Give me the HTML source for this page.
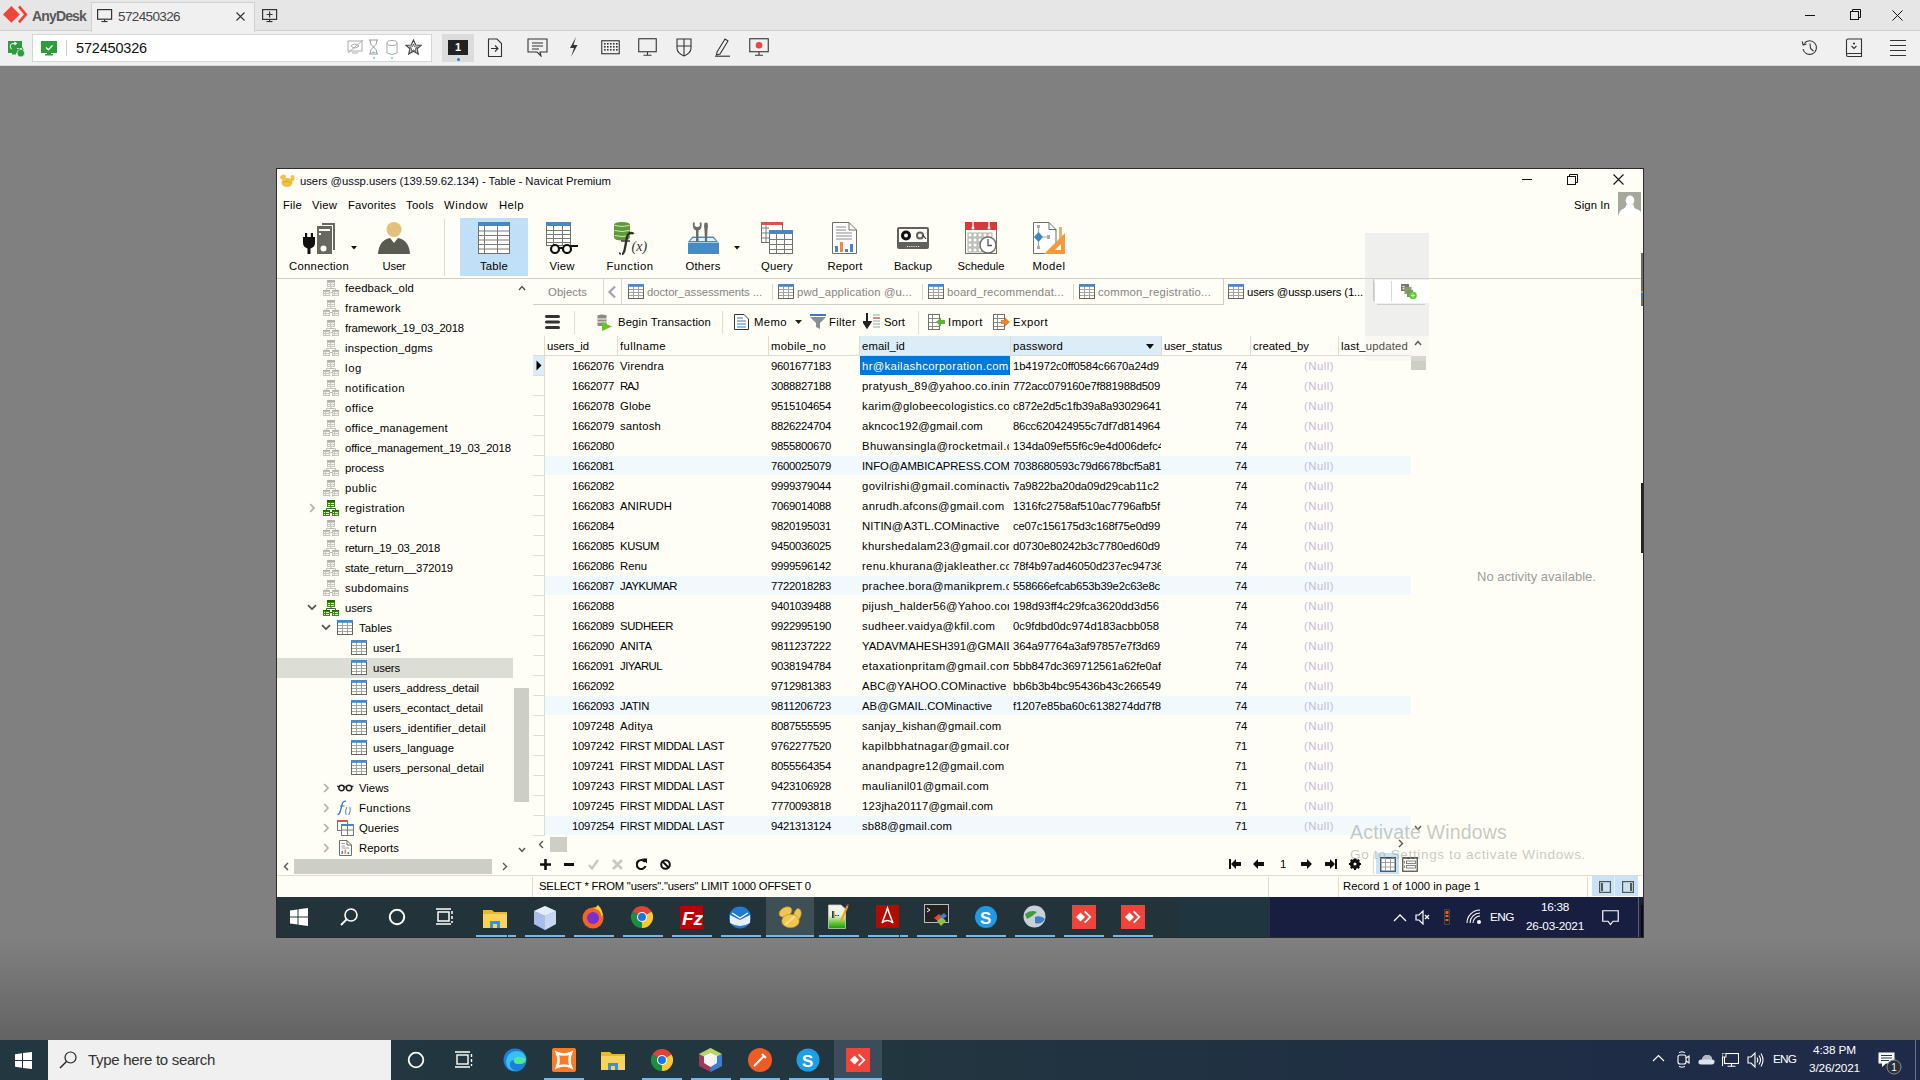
<!DOCTYPE html><html><head><meta charset="utf-8"><style>
html,body{margin:0;padding:0;width:1920px;height:1080px;overflow:hidden;background:#808080;}
body{position:relative;font-family:"Liberation Sans",sans-serif;}
.r{position:absolute;}
.t{position:absolute;white-space:pre;font-family:"Liberation Sans",sans-serif;}
</style></head><body>

<div class="r" style="left:0px;top:0px;width:1920px;height:31px;background:#e6e6e6;"></div>
<div class="r" style="left:0px;top:30px;width:1920px;height:1px;background:#cfcfcf;"></div>
<div class="r" style="left:0px;top:31px;width:1920px;height:35px;background:#f0f0f0;"></div>
<div class="r" style="left:0px;top:65px;width:1920px;height:1px;background:#d9d9d9;"></div>
<div class="r" style="left:0px;top:66px;width:1920px;height:974px;background:linear-gradient(to bottom,#808080 0px,#808080 872px,#636363 974px);"></div>
<svg class="r" style="left:2px;top:5px;" width="27" height="20" viewBox="0 0 27 20"><path d="M1 9.4 L9.4 1 L17.8 9.4 L9.4 17.8 Z" fill="#f0443a"/><path d="M16 2.6 L18 0.6 L25.6 9.4 L18 18.2 L16 16.2 L22 9.4 Z" fill="#f0443a"/></svg>
<div class="t " style="left:32px;top:5px;height:22px;line-height:22px;font-size:14px;color:#595959;letter-spacing:-0.845px;font-weight:bold;">AnyDesk</div>
<div class="r" style="left:91px;top:2px;width:164px;height:29px;background:#f0f0f0;border:1px solid #d0d0d0;border-bottom:none;box-sizing:border-box;height:30px;"></div>
<svg class="r" style="left:97px;top:9px;" width="16" height="14" viewBox="0 0 16 14"><rect x="0.6" y="0.6" width="14" height="9.6" fill="none" stroke="#333" stroke-width="1.2"/><rect x="7" y="10.5" width="1.2" height="2" fill="#333"/><rect x="4.5" y="12" width="6" height="1.1" fill="#333"/></svg>
<div class="t " style="left:118px;top:6px;height:22px;line-height:22px;font-size:13.5px;color:#444;letter-spacing:-0.618px;">572450326</div>
<svg class="r" style="left:235px;top:11px;" width="11" height="11" viewBox="0 0 11 11"><path d="M1.5 1.5 L9.5 9.5 M9.5 1.5 L1.5 9.5" stroke="#333" stroke-width="1.1"/></svg>
<svg class="r" style="left:262px;top:9px;" width="16" height="14" viewBox="0 0 16 14"><rect x="0.6" y="0.6" width="14" height="9.8" fill="none" stroke="#333" stroke-width="1.2"/><path d="M7.6 2.5 V8.5 M4.6 5.5 H10.6" stroke="#333" stroke-width="1.2"/><rect x="7" y="10.5" width="1.2" height="2" fill="#333"/><rect x="4.5" y="12" width="6" height="1.1" fill="#333"/></svg>
<div class="r" style="left:1805px;top:15px;width:10px;height:1px;background:#111;"></div>
<svg class="r" style="left:1850px;top:9px;" width="12" height="12" viewBox="0 0 12 12"><rect x="0.5" y="2.5" width="8" height="8" fill="none" stroke="#111"/><path d="M2.5 2.5 V0.5 H10.5 V8.5 H8.5" fill="none" stroke="#111"/></svg>
<svg class="r" style="left:1892px;top:10px;" width="11" height="11" viewBox="0 0 11 11"><path d="M0.5 0.5 L10.5 10.5 M10.5 0.5 L0.5 10.5" stroke="#111" stroke-width="1"/></svg>
<div class="r" style="left:32px;top:34px;width:400px;height:28px;background:#fff;border:1px solid #d5d5d5;box-sizing:border-box;"></div>
<svg class="r" style="left:7px;top:40px;" width="18" height="17" viewBox="0 0 18 17"><rect x="1" y="1" width="14" height="12" fill="#2e9b3c"/><rect x="5" y="13" width="4" height="1.5" fill="#2e9b3c"/><path d="M4.5 9 Q2.5 7 3.5 5 Q5 3 9 3.5 M7.5 2 L9.5 3.5 L7.5 5" stroke="#e8f5ea" stroke-width="1.1" fill="none"/><rect x="10" y="8" width="8" height="1" fill="#f0f0f0"/><circle cx="13.8" cy="13.2" r="3.8" fill="#2e9b3c" stroke="#f0f0f0" stroke-width="0.8"/><path d="M11.8 10.5 V9.3 Q11.8 7.5 13.8 7.5 Q15.8 7.5 15.8 9.3 V10.5" fill="none" stroke="#2e9b3c" stroke-width="1.1"/></svg>
<svg class="r" style="left:41px;top:41px;" width="17" height="15" viewBox="0 0 17 15"><rect x="0" y="0" width="16" height="12" fill="#2e9b3c"/><rect x="6" y="12" width="4" height="1.5" fill="#2e9b3c"/><rect x="4" y="13" width="8" height="1.5" fill="#2e9b3c"/><path d="M5 6.5 L7.3 8.8 L11.5 4.5" stroke="#fff" stroke-width="1.3" fill="none"/></svg>
<div class="r" style="left:66px;top:40px;width:1px;height:16px;background:#cfcfcf;"></div>
<div class="t " style="left:76px;top:37px;height:22px;line-height:22px;font-size:14.5px;color:#111;letter-spacing:-0.174px;">572450326</div>
<svg class="r" style="left:347px;top:40px;" width="17" height="15" viewBox="0 0 17 15"><rect x="1" y="1" width="14" height="10" fill="none" stroke="#aaa" stroke-width="1"/><path d="M1 13 L16 0" stroke="#aaa"/><path d="M4 6 Q8 2 12 6 Q8 10 4 6" fill="none" stroke="#aaa"/><rect x="5" y="12.5" width="6" height="1" fill="#aaa"/></svg>
<svg class="r" style="left:368px;top:39px;" width="11" height="17" viewBox="0 0 11 17"><path d="M1 1 H10 M1 15 H10 M2 1 Q2 6 5.5 8 Q9 6 9 1 M2 15 Q2 10 5.5 8 Q9 10 9 15" fill="none" stroke="#999" stroke-width="1"/><path d="M3 14 Q5.5 11 8 14 Z" fill="#aaa"/></svg>
<div class="r" style="left:373px;top:57px;width:2px;height:2px;background:#9ecdf2;"></div>
<svg class="r" style="left:386px;top:40px;" width="12" height="16" viewBox="0 0 12 16"><ellipse cx="6" cy="3" rx="5" ry="2.5" fill="none" stroke="#aaa"/><path d="M1 3 V13 Q6 16 11 13 V3" fill="none" stroke="#aaa"/></svg>
<div class="r" style="left:391px;top:57px;width:2px;height:2px;background:#9ecdf2;"></div>
<svg class="r" style="left:405px;top:39px;" width="17" height="16" viewBox="0 0 17 16"><path d="M8.5 1 L10.7 6 L16 6.3 L12 9.8 L13.3 15 L8.5 12.2 L3.7 15 L5 9.8 L1 6.3 L6.3 6 Z" fill="none" stroke="#444" stroke-width="1.2"/><path d="M8.5 5 L9.6 7.8 L12.5 8 L10.3 9.8 L11 12.5 L8.5 11 L6 12.5 L6.7 9.8 L4.5 8 L7.4 7.8 Z" fill="none" stroke="#444" stroke-width="0.8"/></svg>
<div class="r" style="left:442px;top:34px;width:32px;height:28px;background:#dcdcdc;"></div>
<div class="r" style="left:448px;top:40px;width:20px;height:15px;background:#222;"></div>
<div class="t " style="left:448px;top:40px;height:15px;line-height:15px;font-size:11px;color:#fff;width:20px;text-align:center;font-weight:bold;">1</div>
<div class="r" style="left:457px;top:58px;width:3px;height:3px;background:#1b7fd6;border-radius:50%;"></div>
<svg class="r" style="left:487px;top:38px;" width="16" height="20" viewBox="0 0 16 20"><path d="M1.5 1 H10 L14.5 5.5 V18.5 H1.5 Z" fill="none" stroke="#333" stroke-width="1.1"/><path d="M4 10.5 H11 M8 7.5 L11 10.5 L8 13.5" fill="none" stroke="#333" stroke-width="1.1"/></svg>
<svg class="r" style="left:527px;top:38px;" width="21" height="19" viewBox="0 0 21 19"><path d="M1 1 H20 V14 H13 L14 18 L10 14 H1 Z" fill="none" stroke="#333" stroke-width="1.1"/><path d="M5 5 H16 M5 8 H16 M5 11 H12" stroke="#333" stroke-width="1"/></svg>
<svg class="r" style="left:568px;top:37px;" width="11" height="21" viewBox="0 0 11 21"><path d="M8 0 L2 11 L6 11 L3 20 L9.5 8 L5.5 8 Z" fill="#333"/></svg>
<svg class="r" style="left:601px;top:40px;" width="19" height="15" viewBox="0 0 19 15"><rect x="0.75" y="0.75" width="17.5" height="13" fill="none" stroke="#333" stroke-width="1.1"/><rect x="3" y="3" width="1.6" height="1.6" fill="#333"/><rect x="6" y="3" width="1.6" height="1.6" fill="#333"/><rect x="9" y="3" width="1.6" height="1.6" fill="#333"/><rect x="12" y="3" width="1.6" height="1.6" fill="#333"/><rect x="15" y="3" width="1.6" height="1.6" fill="#333"/><rect x="3" y="6" width="1.6" height="1.6" fill="#333"/><rect x="6" y="6" width="1.6" height="1.6" fill="#333"/><rect x="9" y="6" width="1.6" height="1.6" fill="#333"/><rect x="12" y="6" width="1.6" height="1.6" fill="#333"/><rect x="15" y="6" width="1.6" height="1.6" fill="#333"/><rect x="3" y="9" width="1.6" height="1.6" fill="#333"/><rect x="6" y="9" width="1.6" height="1.6" fill="#333"/><rect x="9" y="9" width="1.6" height="1.6" fill="#333"/><rect x="12" y="9" width="1.6" height="1.6" fill="#333"/><rect x="15" y="9" width="1.6" height="1.6" fill="#333"/></svg>
<svg class="r" style="left:638px;top:38px;" width="19" height="18" viewBox="0 0 19 18"><rect x="0.75" y="0.75" width="17.5" height="13" fill="none" stroke="#333" stroke-width="1.1"/><path d="M9.5 14 V17 M5.5 17.3 H13.5" stroke="#333" stroke-width="1.1"/></svg>
<svg class="r" style="left:676px;top:38px;" width="16" height="19" viewBox="0 0 16 19"><path d="M1 1 H15 V10 Q15 15 8 18 Q1 15 1 10 Z" fill="none" stroke="#333" stroke-width="1.1"/><path d="M8 1 V18 M1 8 H15" stroke="#333" stroke-width="1.1"/></svg>
<svg class="r" style="left:713px;top:37px;" width="18" height="20" viewBox="0 0 18 20"><path d="M4 15 L12 2 L15 4 L7 17 L3.5 18 Z" fill="none" stroke="#333" stroke-width="1.1"/><path d="M2 19.2 H17" stroke="#333" stroke-width="1.1"/></svg>
<svg class="r" style="left:749px;top:38px;" width="20" height="18" viewBox="0 0 20 18"><rect x="0.75" y="0.75" width="18.5" height="13" fill="none" stroke="#333" stroke-width="1.1"/><circle cx="10" cy="7.2" r="3.3" fill="#e8463f"/><path d="M10 14 V17 M6 17.3 H14" stroke="#333" stroke-width="1.1"/></svg>
<svg class="r" style="left:1801px;top:39px;" width="18" height="17" viewBox="0 0 18 17"><path d="M3.2 4.5 A6.8 6.8 0 1 1 2 10" fill="none" stroke="#333" stroke-width="1.1"/><path d="M1.2 2.5 L2.2 6 L5.5 5" fill="none" stroke="#333" stroke-width="1.1"/><path d="M9 4.5 L9.5 9.5 L12.5 12" fill="none" stroke="#333" stroke-width="1.1"/></svg>
<svg class="r" style="left:1845px;top:38px;" width="18" height="20" viewBox="0 0 18 20"><path d="M1.5 16 V2.5 Q1.5 1 3 1 H16.5 V18.5 H3 Q1.5 18.5 1.5 17 Q1.5 15.5 3 15.5 H16.5" fill="none" stroke="#333" stroke-width="1.1"/><circle cx="9" cy="5.5" r="1.1" fill="#333"/><path d="M6.5 8 L9 10.5 L11.5 8" fill="none" stroke="#333" stroke-width="1.1"/></svg>
<div class="r" style="left:1890px;top:40px;width:16px;height:1px;background:#333;"></div>
<div class="r" style="left:1890px;top:45px;width:16px;height:1px;background:#333;"></div>
<div class="r" style="left:1890px;top:50px;width:16px;height:1px;background:#333;"></div>
<div class="r" style="left:1890px;top:55px;width:16px;height:1px;background:#333;"></div>
<div class="r" style="left:276px;top:168px;width:1368px;height:770px;background:#fffef6;border:1px solid #2b2b2b;box-sizing:border-box;"></div>
<svg class="r" style="left:279px;top:172px;" width="17" height="16" viewBox="0 0 17 16"><ellipse cx="8" cy="10.5" rx="5.5" ry="4.5" fill="#f0c040"/><ellipse cx="4" cy="5" rx="3" ry="2.2" fill="#f0c040" transform="rotate(-30 4 5)"/><ellipse cx="13.5" cy="6" rx="2" ry="3" fill="#f0c040"/><path d="M4 10 Q8 8 12 11" stroke="#e0a820" fill="none"/></svg>
<div class="t " style="left:300px;top:171px;height:20px;line-height:20px;font-size:11.3px;color:#0a0a1a;letter-spacing:-0.029px;">users @ussp.users (139.59.62.134) - Table - Navicat Premium</div>
<div class="r" style="left:1522px;top:179px;width:10px;height:1px;background:#111;"></div>
<svg class="r" style="left:1567px;top:174px;" width="11" height="11" viewBox="0 0 11 11"><rect x="0.5" y="2.5" width="8" height="8" fill="none" stroke="#111"/><path d="M2.5 2.5 V0.5 H10.5 V8.5 H8.5" fill="none" stroke="#111"/></svg>
<svg class="r" style="left:1613px;top:174px;" width="11" height="11" viewBox="0 0 11 11"><path d="M0.5 0.5 L10.5 10.5 M10.5 0.5 L0.5 10.5" stroke="#111" stroke-width="1.1"/></svg>
<div class="t " style="left:283px;top:195px;height:20px;line-height:20px;font-size:11.3px;color:#000;letter-spacing:0.198px;">File</div>
<div class="t " style="left:312px;top:195px;height:20px;line-height:20px;font-size:11.3px;color:#000;letter-spacing:0.178px;">View</div>
<div class="t " style="left:348px;top:195px;height:20px;line-height:20px;font-size:11.3px;color:#000;letter-spacing:0.170px;">Favorites</div>
<div class="t " style="left:406px;top:195px;height:20px;line-height:20px;font-size:11.3px;color:#000;letter-spacing:0.324px;">Tools</div>
<div class="t " style="left:444px;top:195px;height:20px;line-height:20px;font-size:11.3px;color:#000;letter-spacing:0.635px;">Window</div>
<div class="t " style="left:499px;top:195px;height:20px;line-height:20px;font-size:11.3px;color:#000;letter-spacing:0.440px;">Help</div>
<div class="t " style="left:1574px;top:195px;height:20px;line-height:20px;font-size:11.3px;color:#000;letter-spacing:0.117px;">Sign In</div>
<svg class="r" style="left:1618px;top:192px;" width="23" height="25" viewBox="0 0 23 25"><rect width="23" height="25" fill="#a6a89e"/><ellipse cx="12" cy="8.5" rx="4.3" ry="5" fill="#fff"/><path d="M8.5 12.5 Q8 15 6 16.5 Q1 18 0 25 H23 V20 Q21 17 17 16.5 Q15.5 15 15.5 12.5 Z" fill="#fff"/></svg>
<div class="r" style="left:460px;top:218px;width:68px;height:58px;background:#bfe0f6;"></div>
<div class="r" style="left:444px;top:219px;width:1px;height:57px;background:#dcdcd4;"></div>
<div class="r" style="left:277px;top:278px;width:1365px;height:1px;background:#cfcfc6;"></div>
<svg class="r" style="left:302px;top:222px;" width="34" height="32" viewBox="0 0 34 32"><path d="M1 15 H13 V21 Q13 25 8.5 26.5 V32 H5.5 V26.5 Q1 25 1 21 Z" fill="#111"/><rect x="3" y="11" width="2.2" height="5" fill="#111"/><rect x="8.8" y="11" width="2.2" height="5" fill="#111"/><path d="M20 1 H33 V28 H31 V3 H20 Z" fill="#666a5e"/><rect x="15" y="4" width="15" height="28" fill="#666a5e"/><rect x="17" y="7" width="11" height="2" fill="#fff"/><rect x="17" y="11" width="2" height="2" fill="#fff"/><circle cx="21.5" cy="26.5" r="3" fill="#fff"/></svg>
<svg class="r" style="left:351px;top:246px;" width="6" height="4" viewBox="0 0 6 4"><path d="M0 0 H6 L3 3.5 Z" fill="#111"/></svg>
<div class="t " style="left:289.0px;top:256px;height:20px;line-height:20px;font-size:11.3px;color:#000;letter-spacing:0.284px;">Connection</div>
<svg class="r" style="left:378px;top:222px;" width="32" height="32" viewBox="0 0 32 32"><circle cx="16" cy="7.5" r="7.5" fill="#e3c17a"/><path d="M0 32 Q1 18 12 16 L16 21 L20 16 Q31 18 32 32 Z" fill="#595b50"/></svg>
<div class="t " style="left:382.5px;top:256px;height:20px;line-height:20px;font-size:11.3px;color:#000;letter-spacing:-0.214px;">User</div>
<svg class="r" style="left:478px;top:222px;" width="32" height="32" viewBox="0 0 32 32"><rect x="0.5" y="0.5" width="31" height="31" fill="#fff" stroke="#6f7068"/><rect x="0" y="0" width="32" height="4" fill="#4a86c0"/><rect x="1" y="8.5" width="30" height="1" fill="#7a7b72"/><rect x="1" y="13.0" width="30" height="1" fill="#7a7b72"/><rect x="1" y="17.5" width="30" height="1" fill="#7a7b72"/><rect x="1" y="22.0" width="30" height="1" fill="#7a7b72"/><rect x="1" y="26.5" width="30" height="1" fill="#7a7b72"/><rect x="6" y="4" width="1" height="27" fill="#7a7b72"/><rect x="19" y="4" width="1" height="27" fill="#7a7b72"/></svg>
<div class="t " style="left:480.0px;top:256px;height:20px;line-height:20px;font-size:11.3px;color:#000;letter-spacing:0.198px;">Table</div>
<svg class="r" style="left:546px;top:222px;" width="33" height="32" viewBox="0 0 33 32"><rect x="0.5" y="0.5" width="24" height="23" fill="#fff" stroke="#6f7068"/><rect x="0" y="0" width="25" height="4" fill="#4a86c0"/><rect x="1" y="8.0" width="23" height="1" fill="#7a7b72"/><rect x="1" y="12.0" width="23" height="1" fill="#7a7b72"/><rect x="1" y="16.0" width="23" height="1" fill="#7a7b72"/><rect x="1" y="20.0" width="23" height="1" fill="#7a7b72"/><rect x="7" y="4" width="1" height="19" fill="#7a7b72"/><rect x="16" y="4" width="1" height="19" fill="#7a7b72"/><circle cx="9" cy="27" r="4" fill="#fffef6" stroke="#111" stroke-width="2.2"/><circle cx="21" cy="27" r="4" fill="#fffef6" stroke="#111" stroke-width="2.2"/><path d="M13 26 H17 M25 24 L32 24" stroke="#111" stroke-width="2"/></svg>
<div class="t " style="left:549.5px;top:256px;height:20px;line-height:20px;font-size:11.3px;color:#000;letter-spacing:0.178px;">View</div>
<svg class="r" style="left:613px;top:221px;" width="36" height="36" viewBox="0 0 36 36"><path d="M1 4 Q1 1 9 1 Q17 1 17 4 V16 Q17 19.5 9 19.5 Q1 19.5 1 16 Z" fill="#5e9a3a"/><path d="M1.5 4.5 Q9 6.5 16.5 4.5 M1.5 9.5 Q9 11.5 16.5 9.5 M1.5 14.5 Q9 16.5 16.5 14.5" stroke="#d8eccb" stroke-width="0.9" fill="none"/><path d="M9 33 Q11 33 12 27 L14 16 Q15 12 18 12 Q20 12 20.5 13" fill="none" stroke="#2f302a" stroke-width="2.3"/><path d="M8 20 H17" stroke="#2f302a" stroke-width="1.4"/><path d="M8 33 Q6.5 33 6.5 31.5" fill="none" stroke="#2f302a" stroke-width="1.6"/><text x="18.5" y="30" font-family="Liberation Serif" font-style="italic" font-size="14" fill="#2f302a">(x)</text></svg>
<div class="t " style="left:606.5px;top:256px;height:20px;line-height:20px;font-size:11.3px;color:#000;letter-spacing:0.458px;">Function</div>
<svg class="r" style="left:687px;top:222px;" width="32" height="33" viewBox="0 0 32 33"><path d="M1 20 L5.5 14.5 H26.5 L31 20 Z" fill="#4a8bbf"/><path d="M6 16 H26 L29 19 H3 Z" fill="#e4f2fb"/><rect x="1" y="20" width="31" height="12" fill="#4a8bbf"/><path d="M1 20.5 H32" stroke="#bfe0f4" stroke-width="0.8"/><path d="M6 0.5 Q5 7 9 8.5 V20 H11.5 V8.5 Q15.5 7 14.5 0.5 L12.8 0.5 V4 Q10.3 6.2 7.7 4 V0.5 Z" fill="#6b6d63"/><path d="M17.5 1 Q16.5 4 17.5 8 L18 20 H20 L20.5 8 Q21.5 4 20.5 1 Q19 0 17.5 1 Z" fill="#6b6d63"/></svg>
<svg class="r" style="left:734px;top:246px;" width="6" height="4" viewBox="0 0 6 4"><path d="M0 0 H6 L3 3.5 Z" fill="#111"/></svg>
<div class="t " style="left:685.5px;top:256px;height:20px;line-height:20px;font-size:11.3px;color:#000;letter-spacing:0.182px;">Others</div>
<svg class="r" style="left:761px;top:222px;" width="32" height="32" viewBox="0 0 32 32"><rect x="0.5" y="0.5" width="21" height="20" fill="#fff" stroke="#6f7068"/><rect x="0" y="0" width="22" height="3" fill="#d9544f"/><rect x="8.5" y="8.5" width="23" height="23" fill="#fff" stroke="#6f7068"/><rect x="8" y="8" width="24" height="4" fill="#4a86c0"/><rect x="9" y="17" width="22" height="1" fill="#7a7b72"/><rect x="9" y="22" width="22" height="1" fill="#7a7b72"/><rect x="9" y="27" width="22" height="1" fill="#7a7b72"/><rect x="15" y="12" width="1" height="19" fill="#7a7b72"/><rect x="23" y="12" width="1" height="19" fill="#7a7b72"/><path d="M1 6 H8 M1 11 H8 M1 16 H8 M5 3 V20" stroke="#7a7b72" stroke-width="1"/></svg>
<div class="t " style="left:761.0px;top:256px;height:20px;line-height:20px;font-size:11.3px;color:#000;letter-spacing:0.246px;">Query</div>
<svg class="r" style="left:829px;top:222px;" width="32" height="32" viewBox="0 0 32 32"><path d="M3.5 0.5 H20 L27.5 8 V31.5 H3.5 Z" fill="#fff" stroke="#6f7068"/><path d="M20 0.5 V8 H27.5" fill="none" stroke="#6f7068"/><path d="M7 5 H17 M7 8 H17 M7 11 H23 M7 14 H23 M7 17 H23" stroke="#888" stroke-width="1"/><rect x="6" y="24" width="3" height="6" fill="#4a86c0"/><rect x="11" y="20" width="3" height="10" fill="#ef8a3c"/><rect x="16" y="27" width="3" height="3" fill="#4a86c0"/><rect x="21" y="22" width="3" height="8" fill="#4a86c0"/></svg>
<div class="t " style="left:827.5px;top:256px;height:20px;line-height:20px;font-size:11.3px;color:#000;letter-spacing:0.181px;">Report</div>
<svg class="r" style="left:897px;top:227px;" width="32" height="22" viewBox="0 0 32 22"><rect x="0" y="0" width="32" height="22" rx="2" fill="#5f615a"/><rect x="2" y="2" width="28" height="13" fill="#fffef6"/><circle cx="9" cy="8.5" r="5" fill="#111"/><circle cx="9" cy="8.5" r="2" fill="#fffef6"/><circle cx="23" cy="8.5" r="4" fill="#5f615a"/><circle cx="23" cy="8.5" r="2" fill="#fffef6"/><path d="M26 8 L29 12" stroke="#111"/><path d="M4 22 L7 17 H25 L28 22 Z" fill="#5f615a"/><path d="M10 19.5 H22" stroke="#fffef6" stroke-dasharray="1 1.2"/></svg>
<div class="t " style="left:894.0px;top:256px;height:20px;line-height:20px;font-size:11.3px;color:#000;letter-spacing:0.052px;">Backup</div>
<svg class="r" style="left:965px;top:222px;" width="33" height="33" viewBox="0 0 33 33"><rect x="0.5" y="0.5" width="31" height="31" fill="#fff" stroke="#6f7068"/><rect x="0" y="0" width="32" height="8" fill="#d9383a"/><circle cx="8" cy="6" r="1.5" fill="#fff"/><circle cx="24" cy="6" r="1.5" fill="#fff"/><rect x="7.3" y="0" width="1.4" height="5" fill="#fff"/><rect x="23.3" y="0" width="1.4" height="5" fill="#fff"/><rect x="3" y="11" width="4" height="4" fill="none" stroke="#9a9b92" stroke-width="0.8"/><rect x="8" y="11" width="4" height="4" fill="none" stroke="#9a9b92" stroke-width="0.8"/><rect x="13" y="11" width="4" height="4" fill="none" stroke="#9a9b92" stroke-width="0.8"/><rect x="18" y="11" width="4" height="4" fill="none" stroke="#9a9b92" stroke-width="0.8"/><rect x="23" y="11" width="4" height="4" fill="none" stroke="#9a9b92" stroke-width="0.8"/><rect x="3" y="16" width="4" height="4" fill="none" stroke="#9a9b92" stroke-width="0.8"/><rect x="8" y="16" width="4" height="4" fill="none" stroke="#9a9b92" stroke-width="0.8"/><rect x="13" y="16" width="4" height="4" fill="none" stroke="#9a9b92" stroke-width="0.8"/><rect x="18" y="16" width="4" height="4" fill="none" stroke="#9a9b92" stroke-width="0.8"/><rect x="23" y="16" width="4" height="4" fill="none" stroke="#9a9b92" stroke-width="0.8"/><rect x="3" y="21" width="4" height="4" fill="none" stroke="#9a9b92" stroke-width="0.8"/><rect x="8" y="21" width="4" height="4" fill="none" stroke="#9a9b92" stroke-width="0.8"/><rect x="13" y="21" width="4" height="4" fill="none" stroke="#9a9b92" stroke-width="0.8"/><rect x="18" y="21" width="4" height="4" fill="none" stroke="#9a9b92" stroke-width="0.8"/><rect x="23" y="21" width="4" height="4" fill="none" stroke="#9a9b92" stroke-width="0.8"/><rect x="3" y="26" width="4" height="4" fill="none" stroke="#9a9b92" stroke-width="0.8"/><rect x="8" y="26" width="4" height="4" fill="none" stroke="#9a9b92" stroke-width="0.8"/><rect x="13" y="26" width="4" height="4" fill="none" stroke="#9a9b92" stroke-width="0.8"/><rect x="18" y="26" width="4" height="4" fill="none" stroke="#9a9b92" stroke-width="0.8"/><rect x="23" y="26" width="4" height="4" fill="none" stroke="#9a9b92" stroke-width="0.8"/><circle cx="23" cy="23" r="8" fill="#fff" stroke="#6f7068" stroke-width="1.5"/><path d="M23 17 V23.5 H27" fill="none" stroke="#555" stroke-width="1.3"/></svg>
<div class="t " style="left:957.5px;top:256px;height:20px;line-height:20px;font-size:11.3px;color:#000;letter-spacing:-0.015px;">Schedule</div>
<svg class="r" style="left:1033px;top:222px;" width="32" height="32" viewBox="0 0 32 32"><path d="M0.5 0.5 H16 L23 7.5 V31.5 H0.5 Z" fill="#fff" stroke="#6f7068"/><path d="M16 0.5 V7.5 H23" fill="none" stroke="#6f7068"/><rect x="4" y="3" width="3" height="3" fill="#aaa"/><rect x="4" y="24" width="3" height="3" fill="#aaa"/><path d="M5.5 6 V24 M9 15 H15" stroke="#aaa" stroke-width="1.2"/><path d="M5.5 10 L10 15 L5.5 20 L1 15 Z" fill="#3a86c8"/><rect x="14" y="13" width="3" height="4" fill="#aaa"/><rect x="26" y="5" width="3" height="22" fill="#d4b97a"/><path d="M32 11 V32 H11 Z" fill="#f39a3e"/><path d="M28 22 V28 H22 Z" fill="#fff"/></svg>
<div class="t " style="left:1032.5px;top:256px;height:20px;line-height:20px;font-size:11.3px;color:#000;letter-spacing:0.445px;">Model</div>
<div class="r" style="left:1365px;top:233px;width:64px;height:103px;background:#efefee;"></div>
<div class="r" style="left:1365px;top:278px;width:64px;height:1px;background:#d0d0c8;"></div>
<div class="r" style="left:1375px;top:280px;width:54px;height:23px;background:#ffffff;"></div>
<div class="r" style="left:1373px;top:279px;width:1px;height:22px;background:#c8c8c4;"></div>
<div class="r" style="left:1391px;top:281px;width:1px;height:20px;background:#d8d8d4;"></div>
<div class="r" style="left:1377px;top:304px;width:48px;height:1px;background:#cfcfca;"></div>
<svg class="r" style="left:1401px;top:284px;" width="17" height="16" viewBox="0 0 17 16"><rect x="0" y="0" width="8" height="7" fill="#77776f"/><rect x="1.5" y="2" width="2" height="1.2" fill="#fff"/><rect x="1.5" y="4.2" width="2" height="1.2" fill="#fff"/><rect x="3.5" y="3" width="7" height="7" fill="#8c9a70"/><rect x="6" y="6" width="6" height="7" fill="#7a9a50"/><circle cx="12" cy="11.5" r="3.8" fill="#62c840"/><path d="M12 9.5 V13.5 M10 11.5 H14" stroke="#d8f8c8" stroke-width="0.9"/></svg>
<svg class="r" style="left:323px;top:280px;" width="16" height="16" viewBox="0 0 16 16"><rect x="4" y="0" width="8" height="7" rx="0.6" fill="#c6c8be"/><rect x="4" y="0" width="8" height="2" fill="#b0b2a8"/><rect x="5" y="3" width="2" height="1" fill="#fbfbf4"/><rect x="8" y="3" width="3" height="1" fill="#fbfbf4"/><rect x="5" y="5" width="2" height="1" fill="#fbfbf4"/><rect x="8" y="5" width="3" height="1" fill="#fbfbf4"/><path d="M8 7 V8.5 M3.5 10 V8.5 H12.5 V10 M7 12.5 H9" stroke="#c0c2b8" stroke-width="1" fill="none"/><rect x="0" y="10" width="7" height="6" rx="0.5" fill="#c6c8be"/><rect x="0" y="10" width="7" height="1.3" fill="#b0b2a8"/><rect x="9" y="10" width="7" height="6" rx="0.5" fill="#c6c8be"/><rect x="9" y="10" width="7" height="1.3" fill="#b0b2a8"/><rect x="1" y="12" width="1" height="1" fill="#fbfbf4"/><rect x="3" y="12" width="3" height="1" fill="#fbfbf4"/><rect x="1" y="14" width="1" height="1" fill="#fbfbf4"/><rect x="3" y="14" width="3" height="1" fill="#fbfbf4"/><rect x="10" y="12" width="1" height="1" fill="#fbfbf4"/><rect x="12" y="12" width="3" height="1" fill="#fbfbf4"/><rect x="10" y="14" width="1" height="1" fill="#fbfbf4"/><rect x="12" y="14" width="3" height="1" fill="#fbfbf4"/></svg>
<div class="t " style="left:345px;top:278px;height:20px;line-height:20px;font-size:11.3px;color:#000;letter-spacing:0.148px;">feedback_old</div>
<svg class="r" style="left:323px;top:300px;" width="16" height="16" viewBox="0 0 16 16"><rect x="4" y="0" width="8" height="7" rx="0.6" fill="#c6c8be"/><rect x="4" y="0" width="8" height="2" fill="#b0b2a8"/><rect x="5" y="3" width="2" height="1" fill="#fbfbf4"/><rect x="8" y="3" width="3" height="1" fill="#fbfbf4"/><rect x="5" y="5" width="2" height="1" fill="#fbfbf4"/><rect x="8" y="5" width="3" height="1" fill="#fbfbf4"/><path d="M8 7 V8.5 M3.5 10 V8.5 H12.5 V10 M7 12.5 H9" stroke="#c0c2b8" stroke-width="1" fill="none"/><rect x="0" y="10" width="7" height="6" rx="0.5" fill="#c6c8be"/><rect x="0" y="10" width="7" height="1.3" fill="#b0b2a8"/><rect x="9" y="10" width="7" height="6" rx="0.5" fill="#c6c8be"/><rect x="9" y="10" width="7" height="1.3" fill="#b0b2a8"/><rect x="1" y="12" width="1" height="1" fill="#fbfbf4"/><rect x="3" y="12" width="3" height="1" fill="#fbfbf4"/><rect x="1" y="14" width="1" height="1" fill="#fbfbf4"/><rect x="3" y="14" width="3" height="1" fill="#fbfbf4"/><rect x="10" y="12" width="1" height="1" fill="#fbfbf4"/><rect x="12" y="12" width="3" height="1" fill="#fbfbf4"/><rect x="10" y="14" width="1" height="1" fill="#fbfbf4"/><rect x="12" y="14" width="3" height="1" fill="#fbfbf4"/></svg>
<div class="t " style="left:345px;top:298px;height:20px;line-height:20px;font-size:11.3px;color:#000;letter-spacing:0.362px;">framework</div>
<svg class="r" style="left:323px;top:320px;" width="16" height="16" viewBox="0 0 16 16"><rect x="4" y="0" width="8" height="7" rx="0.6" fill="#c6c8be"/><rect x="4" y="0" width="8" height="2" fill="#b0b2a8"/><rect x="5" y="3" width="2" height="1" fill="#fbfbf4"/><rect x="8" y="3" width="3" height="1" fill="#fbfbf4"/><rect x="5" y="5" width="2" height="1" fill="#fbfbf4"/><rect x="8" y="5" width="3" height="1" fill="#fbfbf4"/><path d="M8 7 V8.5 M3.5 10 V8.5 H12.5 V10 M7 12.5 H9" stroke="#c0c2b8" stroke-width="1" fill="none"/><rect x="0" y="10" width="7" height="6" rx="0.5" fill="#c6c8be"/><rect x="0" y="10" width="7" height="1.3" fill="#b0b2a8"/><rect x="9" y="10" width="7" height="6" rx="0.5" fill="#c6c8be"/><rect x="9" y="10" width="7" height="1.3" fill="#b0b2a8"/><rect x="1" y="12" width="1" height="1" fill="#fbfbf4"/><rect x="3" y="12" width="3" height="1" fill="#fbfbf4"/><rect x="1" y="14" width="1" height="1" fill="#fbfbf4"/><rect x="3" y="14" width="3" height="1" fill="#fbfbf4"/><rect x="10" y="12" width="1" height="1" fill="#fbfbf4"/><rect x="12" y="12" width="3" height="1" fill="#fbfbf4"/><rect x="10" y="14" width="1" height="1" fill="#fbfbf4"/><rect x="12" y="14" width="3" height="1" fill="#fbfbf4"/></svg>
<div class="t " style="left:345px;top:318px;height:20px;line-height:20px;font-size:11.3px;color:#000;letter-spacing:-0.143px;">framework_19_03_2018</div>
<svg class="r" style="left:323px;top:340px;" width="16" height="16" viewBox="0 0 16 16"><rect x="4" y="0" width="8" height="7" rx="0.6" fill="#c6c8be"/><rect x="4" y="0" width="8" height="2" fill="#b0b2a8"/><rect x="5" y="3" width="2" height="1" fill="#fbfbf4"/><rect x="8" y="3" width="3" height="1" fill="#fbfbf4"/><rect x="5" y="5" width="2" height="1" fill="#fbfbf4"/><rect x="8" y="5" width="3" height="1" fill="#fbfbf4"/><path d="M8 7 V8.5 M3.5 10 V8.5 H12.5 V10 M7 12.5 H9" stroke="#c0c2b8" stroke-width="1" fill="none"/><rect x="0" y="10" width="7" height="6" rx="0.5" fill="#c6c8be"/><rect x="0" y="10" width="7" height="1.3" fill="#b0b2a8"/><rect x="9" y="10" width="7" height="6" rx="0.5" fill="#c6c8be"/><rect x="9" y="10" width="7" height="1.3" fill="#b0b2a8"/><rect x="1" y="12" width="1" height="1" fill="#fbfbf4"/><rect x="3" y="12" width="3" height="1" fill="#fbfbf4"/><rect x="1" y="14" width="1" height="1" fill="#fbfbf4"/><rect x="3" y="14" width="3" height="1" fill="#fbfbf4"/><rect x="10" y="12" width="1" height="1" fill="#fbfbf4"/><rect x="12" y="12" width="3" height="1" fill="#fbfbf4"/><rect x="10" y="14" width="1" height="1" fill="#fbfbf4"/><rect x="12" y="14" width="3" height="1" fill="#fbfbf4"/></svg>
<div class="t " style="left:345px;top:338px;height:20px;line-height:20px;font-size:11.3px;color:#000;letter-spacing:0.214px;">inspection_dgms</div>
<svg class="r" style="left:323px;top:360px;" width="16" height="16" viewBox="0 0 16 16"><rect x="4" y="0" width="8" height="7" rx="0.6" fill="#c6c8be"/><rect x="4" y="0" width="8" height="2" fill="#b0b2a8"/><rect x="5" y="3" width="2" height="1" fill="#fbfbf4"/><rect x="8" y="3" width="3" height="1" fill="#fbfbf4"/><rect x="5" y="5" width="2" height="1" fill="#fbfbf4"/><rect x="8" y="5" width="3" height="1" fill="#fbfbf4"/><path d="M8 7 V8.5 M3.5 10 V8.5 H12.5 V10 M7 12.5 H9" stroke="#c0c2b8" stroke-width="1" fill="none"/><rect x="0" y="10" width="7" height="6" rx="0.5" fill="#c6c8be"/><rect x="0" y="10" width="7" height="1.3" fill="#b0b2a8"/><rect x="9" y="10" width="7" height="6" rx="0.5" fill="#c6c8be"/><rect x="9" y="10" width="7" height="1.3" fill="#b0b2a8"/><rect x="1" y="12" width="1" height="1" fill="#fbfbf4"/><rect x="3" y="12" width="3" height="1" fill="#fbfbf4"/><rect x="1" y="14" width="1" height="1" fill="#fbfbf4"/><rect x="3" y="14" width="3" height="1" fill="#fbfbf4"/><rect x="10" y="12" width="1" height="1" fill="#fbfbf4"/><rect x="12" y="12" width="3" height="1" fill="#fbfbf4"/><rect x="10" y="14" width="1" height="1" fill="#fbfbf4"/><rect x="12" y="14" width="3" height="1" fill="#fbfbf4"/></svg>
<div class="t " style="left:345px;top:358px;height:20px;line-height:20px;font-size:11.3px;color:#000;letter-spacing:0.641px;">log</div>
<svg class="r" style="left:323px;top:380px;" width="16" height="16" viewBox="0 0 16 16"><rect x="4" y="0" width="8" height="7" rx="0.6" fill="#c6c8be"/><rect x="4" y="0" width="8" height="2" fill="#b0b2a8"/><rect x="5" y="3" width="2" height="1" fill="#fbfbf4"/><rect x="8" y="3" width="3" height="1" fill="#fbfbf4"/><rect x="5" y="5" width="2" height="1" fill="#fbfbf4"/><rect x="8" y="5" width="3" height="1" fill="#fbfbf4"/><path d="M8 7 V8.5 M3.5 10 V8.5 H12.5 V10 M7 12.5 H9" stroke="#c0c2b8" stroke-width="1" fill="none"/><rect x="0" y="10" width="7" height="6" rx="0.5" fill="#c6c8be"/><rect x="0" y="10" width="7" height="1.3" fill="#b0b2a8"/><rect x="9" y="10" width="7" height="6" rx="0.5" fill="#c6c8be"/><rect x="9" y="10" width="7" height="1.3" fill="#b0b2a8"/><rect x="1" y="12" width="1" height="1" fill="#fbfbf4"/><rect x="3" y="12" width="3" height="1" fill="#fbfbf4"/><rect x="1" y="14" width="1" height="1" fill="#fbfbf4"/><rect x="3" y="14" width="3" height="1" fill="#fbfbf4"/><rect x="10" y="12" width="1" height="1" fill="#fbfbf4"/><rect x="12" y="12" width="3" height="1" fill="#fbfbf4"/><rect x="10" y="14" width="1" height="1" fill="#fbfbf4"/><rect x="12" y="14" width="3" height="1" fill="#fbfbf4"/></svg>
<div class="t " style="left:345px;top:378px;height:20px;line-height:20px;font-size:11.3px;color:#000;letter-spacing:0.498px;">notification</div>
<svg class="r" style="left:323px;top:400px;" width="16" height="16" viewBox="0 0 16 16"><rect x="4" y="0" width="8" height="7" rx="0.6" fill="#c6c8be"/><rect x="4" y="0" width="8" height="2" fill="#b0b2a8"/><rect x="5" y="3" width="2" height="1" fill="#fbfbf4"/><rect x="8" y="3" width="3" height="1" fill="#fbfbf4"/><rect x="5" y="5" width="2" height="1" fill="#fbfbf4"/><rect x="8" y="5" width="3" height="1" fill="#fbfbf4"/><path d="M8 7 V8.5 M3.5 10 V8.5 H12.5 V10 M7 12.5 H9" stroke="#c0c2b8" stroke-width="1" fill="none"/><rect x="0" y="10" width="7" height="6" rx="0.5" fill="#c6c8be"/><rect x="0" y="10" width="7" height="1.3" fill="#b0b2a8"/><rect x="9" y="10" width="7" height="6" rx="0.5" fill="#c6c8be"/><rect x="9" y="10" width="7" height="1.3" fill="#b0b2a8"/><rect x="1" y="12" width="1" height="1" fill="#fbfbf4"/><rect x="3" y="12" width="3" height="1" fill="#fbfbf4"/><rect x="1" y="14" width="1" height="1" fill="#fbfbf4"/><rect x="3" y="14" width="3" height="1" fill="#fbfbf4"/><rect x="10" y="12" width="1" height="1" fill="#fbfbf4"/><rect x="12" y="12" width="3" height="1" fill="#fbfbf4"/><rect x="10" y="14" width="1" height="1" fill="#fbfbf4"/><rect x="12" y="14" width="3" height="1" fill="#fbfbf4"/></svg>
<div class="t " style="left:345px;top:398px;height:20px;line-height:20px;font-size:11.3px;color:#000;letter-spacing:0.366px;">office</div>
<svg class="r" style="left:323px;top:420px;" width="16" height="16" viewBox="0 0 16 16"><rect x="4" y="0" width="8" height="7" rx="0.6" fill="#c6c8be"/><rect x="4" y="0" width="8" height="2" fill="#b0b2a8"/><rect x="5" y="3" width="2" height="1" fill="#fbfbf4"/><rect x="8" y="3" width="3" height="1" fill="#fbfbf4"/><rect x="5" y="5" width="2" height="1" fill="#fbfbf4"/><rect x="8" y="5" width="3" height="1" fill="#fbfbf4"/><path d="M8 7 V8.5 M3.5 10 V8.5 H12.5 V10 M7 12.5 H9" stroke="#c0c2b8" stroke-width="1" fill="none"/><rect x="0" y="10" width="7" height="6" rx="0.5" fill="#c6c8be"/><rect x="0" y="10" width="7" height="1.3" fill="#b0b2a8"/><rect x="9" y="10" width="7" height="6" rx="0.5" fill="#c6c8be"/><rect x="9" y="10" width="7" height="1.3" fill="#b0b2a8"/><rect x="1" y="12" width="1" height="1" fill="#fbfbf4"/><rect x="3" y="12" width="3" height="1" fill="#fbfbf4"/><rect x="1" y="14" width="1" height="1" fill="#fbfbf4"/><rect x="3" y="14" width="3" height="1" fill="#fbfbf4"/><rect x="10" y="12" width="1" height="1" fill="#fbfbf4"/><rect x="12" y="12" width="3" height="1" fill="#fbfbf4"/><rect x="10" y="14" width="1" height="1" fill="#fbfbf4"/><rect x="12" y="14" width="3" height="1" fill="#fbfbf4"/></svg>
<div class="t " style="left:345px;top:418px;height:20px;line-height:20px;font-size:11.3px;color:#000;letter-spacing:0.233px;">office_management</div>
<svg class="r" style="left:323px;top:440px;" width="16" height="16" viewBox="0 0 16 16"><rect x="4" y="0" width="8" height="7" rx="0.6" fill="#c6c8be"/><rect x="4" y="0" width="8" height="2" fill="#b0b2a8"/><rect x="5" y="3" width="2" height="1" fill="#fbfbf4"/><rect x="8" y="3" width="3" height="1" fill="#fbfbf4"/><rect x="5" y="5" width="2" height="1" fill="#fbfbf4"/><rect x="8" y="5" width="3" height="1" fill="#fbfbf4"/><path d="M8 7 V8.5 M3.5 10 V8.5 H12.5 V10 M7 12.5 H9" stroke="#c0c2b8" stroke-width="1" fill="none"/><rect x="0" y="10" width="7" height="6" rx="0.5" fill="#c6c8be"/><rect x="0" y="10" width="7" height="1.3" fill="#b0b2a8"/><rect x="9" y="10" width="7" height="6" rx="0.5" fill="#c6c8be"/><rect x="9" y="10" width="7" height="1.3" fill="#b0b2a8"/><rect x="1" y="12" width="1" height="1" fill="#fbfbf4"/><rect x="3" y="12" width="3" height="1" fill="#fbfbf4"/><rect x="1" y="14" width="1" height="1" fill="#fbfbf4"/><rect x="3" y="14" width="3" height="1" fill="#fbfbf4"/><rect x="10" y="12" width="1" height="1" fill="#fbfbf4"/><rect x="12" y="12" width="3" height="1" fill="#fbfbf4"/><rect x="10" y="14" width="1" height="1" fill="#fbfbf4"/><rect x="12" y="14" width="3" height="1" fill="#fbfbf4"/></svg>
<div class="t " style="left:345px;top:438px;height:20px;line-height:20px;font-size:11.3px;color:#000;letter-spacing:-0.077px;">office_management_19_03_2018</div>
<svg class="r" style="left:323px;top:460px;" width="16" height="16" viewBox="0 0 16 16"><rect x="4" y="0" width="8" height="7" rx="0.6" fill="#c6c8be"/><rect x="4" y="0" width="8" height="2" fill="#b0b2a8"/><rect x="5" y="3" width="2" height="1" fill="#fbfbf4"/><rect x="8" y="3" width="3" height="1" fill="#fbfbf4"/><rect x="5" y="5" width="2" height="1" fill="#fbfbf4"/><rect x="8" y="5" width="3" height="1" fill="#fbfbf4"/><path d="M8 7 V8.5 M3.5 10 V8.5 H12.5 V10 M7 12.5 H9" stroke="#c0c2b8" stroke-width="1" fill="none"/><rect x="0" y="10" width="7" height="6" rx="0.5" fill="#c6c8be"/><rect x="0" y="10" width="7" height="1.3" fill="#b0b2a8"/><rect x="9" y="10" width="7" height="6" rx="0.5" fill="#c6c8be"/><rect x="9" y="10" width="7" height="1.3" fill="#b0b2a8"/><rect x="1" y="12" width="1" height="1" fill="#fbfbf4"/><rect x="3" y="12" width="3" height="1" fill="#fbfbf4"/><rect x="1" y="14" width="1" height="1" fill="#fbfbf4"/><rect x="3" y="14" width="3" height="1" fill="#fbfbf4"/><rect x="10" y="12" width="1" height="1" fill="#fbfbf4"/><rect x="12" y="12" width="3" height="1" fill="#fbfbf4"/><rect x="10" y="14" width="1" height="1" fill="#fbfbf4"/><rect x="12" y="14" width="3" height="1" fill="#fbfbf4"/></svg>
<div class="t " style="left:345px;top:458px;height:20px;line-height:20px;font-size:11.3px;color:#000;letter-spacing:-0.081px;">process</div>
<svg class="r" style="left:323px;top:480px;" width="16" height="16" viewBox="0 0 16 16"><rect x="4" y="0" width="8" height="7" rx="0.6" fill="#c6c8be"/><rect x="4" y="0" width="8" height="2" fill="#b0b2a8"/><rect x="5" y="3" width="2" height="1" fill="#fbfbf4"/><rect x="8" y="3" width="3" height="1" fill="#fbfbf4"/><rect x="5" y="5" width="2" height="1" fill="#fbfbf4"/><rect x="8" y="5" width="3" height="1" fill="#fbfbf4"/><path d="M8 7 V8.5 M3.5 10 V8.5 H12.5 V10 M7 12.5 H9" stroke="#c0c2b8" stroke-width="1" fill="none"/><rect x="0" y="10" width="7" height="6" rx="0.5" fill="#c6c8be"/><rect x="0" y="10" width="7" height="1.3" fill="#b0b2a8"/><rect x="9" y="10" width="7" height="6" rx="0.5" fill="#c6c8be"/><rect x="9" y="10" width="7" height="1.3" fill="#b0b2a8"/><rect x="1" y="12" width="1" height="1" fill="#fbfbf4"/><rect x="3" y="12" width="3" height="1" fill="#fbfbf4"/><rect x="1" y="14" width="1" height="1" fill="#fbfbf4"/><rect x="3" y="14" width="3" height="1" fill="#fbfbf4"/><rect x="10" y="12" width="1" height="1" fill="#fbfbf4"/><rect x="12" y="12" width="3" height="1" fill="#fbfbf4"/><rect x="10" y="14" width="1" height="1" fill="#fbfbf4"/><rect x="12" y="14" width="3" height="1" fill="#fbfbf4"/></svg>
<div class="t " style="left:345px;top:478px;height:20px;line-height:20px;font-size:11.3px;color:#000;letter-spacing:0.413px;">public</div>
<svg class="r" style="left:323px;top:500px;" width="16" height="16" viewBox="0 0 16 16"><rect x="4" y="0" width="8" height="7" rx="0.6" fill="#3a8c12"/><rect x="4" y="0" width="8" height="2" fill="#1f6a00"/><rect x="5" y="3" width="2" height="1" fill="#d8f5b8"/><rect x="8" y="3" width="3" height="1" fill="#d8f5b8"/><rect x="5" y="5" width="2" height="1" fill="#d8f5b8"/><rect x="8" y="5" width="3" height="1" fill="#d8f5b8"/><path d="M8 7 V8.5 M3.5 10 V8.5 H12.5 V10 M7 12.5 H9" stroke="#4d5a44" stroke-width="1" fill="none"/><rect x="0" y="10" width="7" height="6" rx="0.5" fill="#3a8c12"/><rect x="0" y="10" width="7" height="1.3" fill="#1f6a00"/><rect x="9" y="10" width="7" height="6" rx="0.5" fill="#3a8c12"/><rect x="9" y="10" width="7" height="1.3" fill="#1f6a00"/><rect x="1" y="12" width="1" height="1" fill="#d8f5b8"/><rect x="3" y="12" width="3" height="1" fill="#d8f5b8"/><rect x="1" y="14" width="1" height="1" fill="#d8f5b8"/><rect x="3" y="14" width="3" height="1" fill="#d8f5b8"/><rect x="10" y="12" width="1" height="1" fill="#d8f5b8"/><rect x="12" y="12" width="3" height="1" fill="#d8f5b8"/><rect x="10" y="14" width="1" height="1" fill="#d8f5b8"/><rect x="12" y="14" width="3" height="1" fill="#d8f5b8"/></svg>
<div class="t " style="left:345px;top:498px;height:20px;line-height:20px;font-size:11.3px;color:#000;letter-spacing:0.342px;">registration</div>
<svg class="r" style="left:323px;top:520px;" width="16" height="16" viewBox="0 0 16 16"><rect x="4" y="0" width="8" height="7" rx="0.6" fill="#c6c8be"/><rect x="4" y="0" width="8" height="2" fill="#b0b2a8"/><rect x="5" y="3" width="2" height="1" fill="#fbfbf4"/><rect x="8" y="3" width="3" height="1" fill="#fbfbf4"/><rect x="5" y="5" width="2" height="1" fill="#fbfbf4"/><rect x="8" y="5" width="3" height="1" fill="#fbfbf4"/><path d="M8 7 V8.5 M3.5 10 V8.5 H12.5 V10 M7 12.5 H9" stroke="#c0c2b8" stroke-width="1" fill="none"/><rect x="0" y="10" width="7" height="6" rx="0.5" fill="#c6c8be"/><rect x="0" y="10" width="7" height="1.3" fill="#b0b2a8"/><rect x="9" y="10" width="7" height="6" rx="0.5" fill="#c6c8be"/><rect x="9" y="10" width="7" height="1.3" fill="#b0b2a8"/><rect x="1" y="12" width="1" height="1" fill="#fbfbf4"/><rect x="3" y="12" width="3" height="1" fill="#fbfbf4"/><rect x="1" y="14" width="1" height="1" fill="#fbfbf4"/><rect x="3" y="14" width="3" height="1" fill="#fbfbf4"/><rect x="10" y="12" width="1" height="1" fill="#fbfbf4"/><rect x="12" y="12" width="3" height="1" fill="#fbfbf4"/><rect x="10" y="14" width="1" height="1" fill="#fbfbf4"/><rect x="12" y="14" width="3" height="1" fill="#fbfbf4"/></svg>
<div class="t " style="left:345px;top:518px;height:20px;line-height:20px;font-size:11.3px;color:#000;letter-spacing:0.414px;">return</div>
<svg class="r" style="left:323px;top:540px;" width="16" height="16" viewBox="0 0 16 16"><rect x="4" y="0" width="8" height="7" rx="0.6" fill="#c6c8be"/><rect x="4" y="0" width="8" height="2" fill="#b0b2a8"/><rect x="5" y="3" width="2" height="1" fill="#fbfbf4"/><rect x="8" y="3" width="3" height="1" fill="#fbfbf4"/><rect x="5" y="5" width="2" height="1" fill="#fbfbf4"/><rect x="8" y="5" width="3" height="1" fill="#fbfbf4"/><path d="M8 7 V8.5 M3.5 10 V8.5 H12.5 V10 M7 12.5 H9" stroke="#c0c2b8" stroke-width="1" fill="none"/><rect x="0" y="10" width="7" height="6" rx="0.5" fill="#c6c8be"/><rect x="0" y="10" width="7" height="1.3" fill="#b0b2a8"/><rect x="9" y="10" width="7" height="6" rx="0.5" fill="#c6c8be"/><rect x="9" y="10" width="7" height="1.3" fill="#b0b2a8"/><rect x="1" y="12" width="1" height="1" fill="#fbfbf4"/><rect x="3" y="12" width="3" height="1" fill="#fbfbf4"/><rect x="1" y="14" width="1" height="1" fill="#fbfbf4"/><rect x="3" y="14" width="3" height="1" fill="#fbfbf4"/><rect x="10" y="12" width="1" height="1" fill="#fbfbf4"/><rect x="12" y="12" width="3" height="1" fill="#fbfbf4"/><rect x="10" y="14" width="1" height="1" fill="#fbfbf4"/><rect x="12" y="14" width="3" height="1" fill="#fbfbf4"/></svg>
<div class="t " style="left:345px;top:538px;height:20px;line-height:20px;font-size:11.3px;color:#000;letter-spacing:-0.214px;">return_19_03_2018</div>
<svg class="r" style="left:323px;top:560px;" width="16" height="16" viewBox="0 0 16 16"><rect x="4" y="0" width="8" height="7" rx="0.6" fill="#c6c8be"/><rect x="4" y="0" width="8" height="2" fill="#b0b2a8"/><rect x="5" y="3" width="2" height="1" fill="#fbfbf4"/><rect x="8" y="3" width="3" height="1" fill="#fbfbf4"/><rect x="5" y="5" width="2" height="1" fill="#fbfbf4"/><rect x="8" y="5" width="3" height="1" fill="#fbfbf4"/><path d="M8 7 V8.5 M3.5 10 V8.5 H12.5 V10 M7 12.5 H9" stroke="#c0c2b8" stroke-width="1" fill="none"/><rect x="0" y="10" width="7" height="6" rx="0.5" fill="#c6c8be"/><rect x="0" y="10" width="7" height="1.3" fill="#b0b2a8"/><rect x="9" y="10" width="7" height="6" rx="0.5" fill="#c6c8be"/><rect x="9" y="10" width="7" height="1.3" fill="#b0b2a8"/><rect x="1" y="12" width="1" height="1" fill="#fbfbf4"/><rect x="3" y="12" width="3" height="1" fill="#fbfbf4"/><rect x="1" y="14" width="1" height="1" fill="#fbfbf4"/><rect x="3" y="14" width="3" height="1" fill="#fbfbf4"/><rect x="10" y="12" width="1" height="1" fill="#fbfbf4"/><rect x="12" y="12" width="3" height="1" fill="#fbfbf4"/><rect x="10" y="14" width="1" height="1" fill="#fbfbf4"/><rect x="12" y="14" width="3" height="1" fill="#fbfbf4"/></svg>
<div class="t " style="left:345px;top:558px;height:20px;line-height:20px;font-size:11.3px;color:#000;letter-spacing:-0.128px;">state_return__372019</div>
<svg class="r" style="left:323px;top:580px;" width="16" height="16" viewBox="0 0 16 16"><rect x="4" y="0" width="8" height="7" rx="0.6" fill="#c6c8be"/><rect x="4" y="0" width="8" height="2" fill="#b0b2a8"/><rect x="5" y="3" width="2" height="1" fill="#fbfbf4"/><rect x="8" y="3" width="3" height="1" fill="#fbfbf4"/><rect x="5" y="5" width="2" height="1" fill="#fbfbf4"/><rect x="8" y="5" width="3" height="1" fill="#fbfbf4"/><path d="M8 7 V8.5 M3.5 10 V8.5 H12.5 V10 M7 12.5 H9" stroke="#c0c2b8" stroke-width="1" fill="none"/><rect x="0" y="10" width="7" height="6" rx="0.5" fill="#c6c8be"/><rect x="0" y="10" width="7" height="1.3" fill="#b0b2a8"/><rect x="9" y="10" width="7" height="6" rx="0.5" fill="#c6c8be"/><rect x="9" y="10" width="7" height="1.3" fill="#b0b2a8"/><rect x="1" y="12" width="1" height="1" fill="#fbfbf4"/><rect x="3" y="12" width="3" height="1" fill="#fbfbf4"/><rect x="1" y="14" width="1" height="1" fill="#fbfbf4"/><rect x="3" y="14" width="3" height="1" fill="#fbfbf4"/><rect x="10" y="12" width="1" height="1" fill="#fbfbf4"/><rect x="12" y="12" width="3" height="1" fill="#fbfbf4"/><rect x="10" y="14" width="1" height="1" fill="#fbfbf4"/><rect x="12" y="14" width="3" height="1" fill="#fbfbf4"/></svg>
<div class="t " style="left:345px;top:578px;height:20px;line-height:20px;font-size:11.3px;color:#000;letter-spacing:0.307px;">subdomains</div>
<svg class="r" style="left:323px;top:600px;" width="16" height="16" viewBox="0 0 16 16"><rect x="4" y="0" width="8" height="7" rx="0.6" fill="#3a8c12"/><rect x="4" y="0" width="8" height="2" fill="#1f6a00"/><rect x="5" y="3" width="2" height="1" fill="#d8f5b8"/><rect x="8" y="3" width="3" height="1" fill="#d8f5b8"/><rect x="5" y="5" width="2" height="1" fill="#d8f5b8"/><rect x="8" y="5" width="3" height="1" fill="#d8f5b8"/><path d="M8 7 V8.5 M3.5 10 V8.5 H12.5 V10 M7 12.5 H9" stroke="#4d5a44" stroke-width="1" fill="none"/><rect x="0" y="10" width="7" height="6" rx="0.5" fill="#3a8c12"/><rect x="0" y="10" width="7" height="1.3" fill="#1f6a00"/><rect x="9" y="10" width="7" height="6" rx="0.5" fill="#3a8c12"/><rect x="9" y="10" width="7" height="1.3" fill="#1f6a00"/><rect x="1" y="12" width="1" height="1" fill="#d8f5b8"/><rect x="3" y="12" width="3" height="1" fill="#d8f5b8"/><rect x="1" y="14" width="1" height="1" fill="#d8f5b8"/><rect x="3" y="14" width="3" height="1" fill="#d8f5b8"/><rect x="10" y="12" width="1" height="1" fill="#d8f5b8"/><rect x="12" y="12" width="3" height="1" fill="#d8f5b8"/><rect x="10" y="14" width="1" height="1" fill="#d8f5b8"/><rect x="12" y="14" width="3" height="1" fill="#d8f5b8"/></svg>
<div class="t " style="left:345px;top:598px;height:20px;line-height:20px;font-size:11.3px;color:#000;letter-spacing:-0.126px;">users</div>
<svg class="r" style="left:309px;top:503px;" width="7" height="10" viewBox="0 0 7 10"><path d="M1.2 1 L5 5 L1.2 9" fill="none" stroke="#b0b1a8" stroke-width="1.7"/></svg>
<svg class="r" style="left:307px;top:604px;" width="10" height="7" viewBox="0 0 10 7"><path d="M1 1.2 L5 5 L9 1.2" fill="none" stroke="#4d5245" stroke-width="1.7"/></svg>
<svg class="r" style="left:321px;top:624px;" width="10" height="7" viewBox="0 0 10 7"><path d="M1 1.2 L5 5 L9 1.2" fill="none" stroke="#4d5245" stroke-width="1.7"/></svg>
<svg class="r" style="left:337px;top:620px;" width="16" height="15" viewBox="0 0 16 15"><rect x="0.5" y="0.5" width="15" height="14" fill="#fff" stroke="#66675e"/><path d="M1 5.5 H15 M1 8.5 H15 M1 11.5 H15 M5.5 2 V14 M10.5 2 V14" stroke="#a4a59c" stroke-width="1"/><rect x="0" y="0" width="16" height="2.8" fill="#4a88c4"/></svg>
<div class="t " style="left:359px;top:618px;height:20px;line-height:20px;font-size:11.3px;color:#000;letter-spacing:0.056px;">Tables</div>
<div class="r" style="left:277px;top:658px;width:236px;height:20px;background:#dcddd4;"></div>
<svg class="r" style="left:351px;top:640px;" width="16" height="15" viewBox="0 0 16 15"><rect x="0.5" y="0.5" width="15" height="14" fill="#fff" stroke="#66675e"/><path d="M1 5.5 H15 M1 8.5 H15 M1 11.5 H15 M5.5 2 V14 M10.5 2 V14" stroke="#a4a59c" stroke-width="1"/><rect x="0" y="0" width="16" height="2.8" fill="#4a88c4"/></svg>
<div class="t " style="left:373px;top:638px;height:20px;line-height:20px;font-size:11.3px;color:#000;letter-spacing:-0.053px;">user1</div>
<svg class="r" style="left:351px;top:660px;" width="16" height="15" viewBox="0 0 16 15"><rect x="0.5" y="0.5" width="15" height="14" fill="#fff" stroke="#66675e"/><path d="M1 5.5 H15 M1 8.5 H15 M1 11.5 H15 M5.5 2 V14 M10.5 2 V14" stroke="#a4a59c" stroke-width="1"/><rect x="0" y="0" width="16" height="2.8" fill="#4a88c4"/></svg>
<div class="t " style="left:373px;top:658px;height:20px;line-height:20px;font-size:11.3px;color:#000;letter-spacing:-0.126px;">users</div>
<svg class="r" style="left:351px;top:680px;" width="16" height="15" viewBox="0 0 16 15"><rect x="0.5" y="0.5" width="15" height="14" fill="#fff" stroke="#66675e"/><path d="M1 5.5 H15 M1 8.5 H15 M1 11.5 H15 M5.5 2 V14 M10.5 2 V14" stroke="#a4a59c" stroke-width="1"/><rect x="0" y="0" width="16" height="2.8" fill="#4a88c4"/></svg>
<div class="t " style="left:373px;top:678px;height:20px;line-height:20px;font-size:11.3px;color:#000;letter-spacing:-0.070px;">users_address_detail</div>
<svg class="r" style="left:351px;top:700px;" width="16" height="15" viewBox="0 0 16 15"><rect x="0.5" y="0.5" width="15" height="14" fill="#fff" stroke="#66675e"/><path d="M1 5.5 H15 M1 8.5 H15 M1 11.5 H15 M5.5 2 V14 M10.5 2 V14" stroke="#a4a59c" stroke-width="1"/><rect x="0" y="0" width="16" height="2.8" fill="#4a88c4"/></svg>
<div class="t " style="left:373px;top:698px;height:20px;line-height:20px;font-size:11.3px;color:#000;letter-spacing:0.004px;">users_econtact_detail</div>
<svg class="r" style="left:351px;top:720px;" width="16" height="15" viewBox="0 0 16 15"><rect x="0.5" y="0.5" width="15" height="14" fill="#fff" stroke="#66675e"/><path d="M1 5.5 H15 M1 8.5 H15 M1 11.5 H15 M5.5 2 V14 M10.5 2 V14" stroke="#a4a59c" stroke-width="1"/><rect x="0" y="0" width="16" height="2.8" fill="#4a88c4"/></svg>
<div class="t " style="left:373px;top:718px;height:20px;line-height:20px;font-size:11.3px;color:#000;letter-spacing:0.134px;">users_identifier_detail</div>
<svg class="r" style="left:351px;top:740px;" width="16" height="15" viewBox="0 0 16 15"><rect x="0.5" y="0.5" width="15" height="14" fill="#fff" stroke="#66675e"/><path d="M1 5.5 H15 M1 8.5 H15 M1 11.5 H15 M5.5 2 V14 M10.5 2 V14" stroke="#a4a59c" stroke-width="1"/><rect x="0" y="0" width="16" height="2.8" fill="#4a88c4"/></svg>
<div class="t " style="left:373px;top:738px;height:20px;line-height:20px;font-size:11.3px;color:#000;letter-spacing:0.042px;">users_language</div>
<svg class="r" style="left:351px;top:760px;" width="16" height="15" viewBox="0 0 16 15"><rect x="0.5" y="0.5" width="15" height="14" fill="#fff" stroke="#66675e"/><path d="M1 5.5 H15 M1 8.5 H15 M1 11.5 H15 M5.5 2 V14 M10.5 2 V14" stroke="#a4a59c" stroke-width="1"/><rect x="0" y="0" width="16" height="2.8" fill="#4a88c4"/></svg>
<div class="t " style="left:373px;top:758px;height:20px;line-height:20px;font-size:11.3px;color:#000;letter-spacing:0.021px;">users_personal_detail</div>
<svg class="r" style="left:323px;top:783px;" width="7" height="10" viewBox="0 0 7 10"><path d="M1.2 1 L5 5 L1.2 9" fill="none" stroke="#b0b1a8" stroke-width="1.7"/></svg>
<div class="t " style="left:359px;top:778px;height:20px;line-height:20px;font-size:11.3px;color:#000;letter-spacing:0.012px;">Views</div>
<svg class="r" style="left:323px;top:803px;" width="7" height="10" viewBox="0 0 7 10"><path d="M1.2 1 L5 5 L1.2 9" fill="none" stroke="#b0b1a8" stroke-width="1.7"/></svg>
<div class="t " style="left:359px;top:798px;height:20px;line-height:20px;font-size:11.3px;color:#000;letter-spacing:0.335px;">Functions</div>
<svg class="r" style="left:323px;top:823px;" width="7" height="10" viewBox="0 0 7 10"><path d="M1.2 1 L5 5 L1.2 9" fill="none" stroke="#b0b1a8" stroke-width="1.7"/></svg>
<div class="t " style="left:359px;top:818px;height:20px;line-height:20px;font-size:11.3px;color:#000;letter-spacing:0.062px;">Queries</div>
<svg class="r" style="left:323px;top:843px;" width="7" height="10" viewBox="0 0 7 10"><path d="M1.2 1 L5 5 L1.2 9" fill="none" stroke="#b0b1a8" stroke-width="1.7"/></svg>
<div class="t " style="left:359px;top:838px;height:20px;line-height:20px;font-size:11.3px;color:#000;letter-spacing:0.062px;">Reports</div>
<svg class="r" style="left:337px;top:783px;" width="17" height="9" viewBox="0 0 17 9"><circle cx="4.5" cy="5" r="2.7" fill="none" stroke="#222" stroke-width="1.5"/><circle cx="12" cy="5" r="2.7" fill="none" stroke="#222" stroke-width="1.5"/><path d="M7 4.3 Q8.2 3.6 9.5 4.3 M0 3 L2 4 M14.5 4 L16.5 3" stroke="#222" stroke-width="1.3" fill="none"/></svg>
<svg class="r" style="left:337px;top:800px;" width="17" height="16" viewBox="0 0 17 16"><path d="M0.5 14.5 Q2.5 14.5 3.5 10.5 L5.3 3.5 Q6.2 0.8 9 1.2" fill="none" stroke="#3a78b8" stroke-width="1.3"/><path d="M3 6 H7.5" stroke="#3a78b8" stroke-width="1"/><path d="M9.8 7 Q7.8 10.5 9 15 M12.8 7 Q14.2 10.8 11.8 15" fill="none" stroke="#3a78b8" stroke-width="0.9"/></svg>
<svg class="r" style="left:337px;top:820px;" width="17" height="16" viewBox="0 0 17 16"><rect x="0.5" y="0.5" width="10" height="10" fill="#fff" stroke="#7a7b72"/><rect x="0" y="0" width="11" height="2" fill="#d9544f"/><rect x="4.5" y="4.5" width="12" height="11" fill="#fff" stroke="#7a7b72"/><rect x="4" y="4" width="13" height="2" fill="#4a86c0"/><path d="M5 10 H16 M10.5 6 V15" stroke="#7a7b72"/></svg>
<svg class="r" style="left:339px;top:840px;" width="13" height="16" viewBox="0 0 13 16"><path d="M0.5 0.5 H8 L12.5 5 V15.5 H0.5 Z" fill="#fff" stroke="#6f7068"/><path d="M8 0.5 V5 H12.5" fill="none" stroke="#6f7068"/><path d="M2.5 3.5 H6 M2.5 6 H6 M2.5 8 H10" stroke="#999" stroke-width="0.9"/><rect x="2.5" y="11" width="1.6" height="3" fill="#4a86c0"/><rect x="5.5" y="9.5" width="1.6" height="4.5" fill="#ef8a3c"/><rect x="8.5" y="12" width="1.6" height="2" fill="#4a86c0"/></svg>
<svg class="r" style="left:518px;top:285px;" width="8" height="6" viewBox="0 0 8 6"><path d="M1 5 L4 1.5 L7 5" fill="none" stroke="#555" stroke-width="1.4"/></svg>
<div class="r" style="left:514px;top:688px;width:15px;height:114px;background:#cdcec6;"></div>
<svg class="r" style="left:518px;top:847px;" width="8" height="6" viewBox="0 0 8 6"><path d="M1 1 L4 4.5 L7 1" fill="none" stroke="#555" stroke-width="1.4"/></svg>
<div class="r" style="left:294px;top:859px;width:198px;height:15px;background:#cdcec6;"></div>
<svg class="r" style="left:283px;top:862px;" width="6" height="9" viewBox="0 0 6 9"><path d="M5 1 L1.5 4.5 L5 8" fill="none" stroke="#555" stroke-width="1.4"/></svg>
<svg class="r" style="left:502px;top:862px;" width="6" height="9" viewBox="0 0 6 9"><path d="M1 1 L4.5 4.5 L1 8" fill="none" stroke="#555" stroke-width="1.4"/></svg>
<div class="r" style="left:277px;top:875px;width:1365px;height:1px;background:#dcdcd4;"></div>
<div class="r" style="left:533px;top:304px;width:691px;height:1px;background:#cfcfc6;"></div>
<div class="r" style="left:1223px;top:279px;width:1px;height:26px;background:#cfcfc6;"></div>
<div class="t " style="left:548px;top:282px;height:20px;line-height:20px;font-size:11.3px;color:#858585;letter-spacing:0.099px;">Objects</div>
<div class="r" style="left:603px;top:279px;width:1px;height:25px;background:#d8d8d0;"></div>
<div class="r" style="left:621px;top:279px;width:1px;height:25px;background:#d8d8d0;"></div>
<svg class="r" style="left:607px;top:285px;" width="10" height="14" viewBox="0 0 10 14"><path d="M8 1.5 L2.5 7 L8 12.5" fill="none" stroke="#a59fb8" stroke-width="2.2"/></svg>
<svg class="r" style="left:628px;top:284px;" width="16" height="15" viewBox="0 0 16 15"><rect x="0.5" y="0.5" width="15" height="14" fill="#fff" stroke="#66675e"/><path d="M1 5.5 H15 M1 8.5 H15 M1 11.5 H15 M5.5 2 V14 M10.5 2 V14" stroke="#a4a59c" stroke-width="1"/><rect x="0" y="0" width="16" height="2.8" fill="#4a88c4"/></svg>
<div class="t " style="left:647px;top:282px;height:20px;line-height:20px;font-size:11.3px;color:#858585;letter-spacing:-0.054px;">doctor_assessments ...</div>
<div class="r" style="left:772px;top:284px;width:1px;height:16px;background:#d8d8d0;"></div>
<svg class="r" style="left:778px;top:284px;" width="16" height="15" viewBox="0 0 16 15"><rect x="0.5" y="0.5" width="15" height="14" fill="#fff" stroke="#66675e"/><path d="M1 5.5 H15 M1 8.5 H15 M1 11.5 H15 M5.5 2 V14 M10.5 2 V14" stroke="#a4a59c" stroke-width="1"/><rect x="0" y="0" width="16" height="2.8" fill="#4a88c4"/></svg>
<div class="t " style="left:797px;top:282px;height:20px;line-height:20px;font-size:11.3px;color:#858585;letter-spacing:0.174px;">pwd_application @u...</div>
<div class="r" style="left:922px;top:284px;width:1px;height:16px;background:#d8d8d0;"></div>
<svg class="r" style="left:928px;top:284px;" width="16" height="15" viewBox="0 0 16 15"><rect x="0.5" y="0.5" width="15" height="14" fill="#fff" stroke="#66675e"/><path d="M1 5.5 H15 M1 8.5 H15 M1 11.5 H15 M5.5 2 V14 M10.5 2 V14" stroke="#a4a59c" stroke-width="1"/><rect x="0" y="0" width="16" height="2.8" fill="#4a88c4"/></svg>
<div class="t " style="left:947px;top:282px;height:20px;line-height:20px;font-size:11.3px;color:#858585;letter-spacing:0.166px;">board_recommendat...</div>
<div class="r" style="left:1073px;top:284px;width:1px;height:16px;background:#d8d8d0;"></div>
<svg class="r" style="left:1079px;top:284px;" width="16" height="15" viewBox="0 0 16 15"><rect x="0.5" y="0.5" width="15" height="14" fill="#fff" stroke="#66675e"/><path d="M1 5.5 H15 M1 8.5 H15 M1 11.5 H15 M5.5 2 V14 M10.5 2 V14" stroke="#a4a59c" stroke-width="1"/><rect x="0" y="0" width="16" height="2.8" fill="#4a88c4"/></svg>
<div class="t " style="left:1098px;top:282px;height:20px;line-height:20px;font-size:11.3px;color:#858585;letter-spacing:0.208px;">common_registratio...</div>
<svg class="r" style="left:1228px;top:284px;" width="16" height="15" viewBox="0 0 16 15"><rect x="0.5" y="0.5" width="15" height="14" fill="#fff" stroke="#66675e"/><path d="M1 5.5 H15 M1 8.5 H15 M1 11.5 H15 M5.5 2 V14 M10.5 2 V14" stroke="#a4a59c" stroke-width="1"/><rect x="0" y="0" width="16" height="2.8" fill="#4a88c4"/></svg>
<div class="t " style="left:1247px;top:282px;height:20px;line-height:20px;font-size:11.3px;color:#000;letter-spacing:-0.151px;">users @ussp.users (1...</div>
<div class="r" style="left:1374px;top:282px;width:1px;height:20px;background:#d8d8d0;"></div>
<svg class="r" style="left:545px;top:315px;" width="16" height="14" viewBox="0 0 16 14"><rect x="0" y="0" width="15" height="3" rx="1.5" fill="#333"/><rect x="0" y="5.5" width="15" height="3" rx="1.5" fill="#333"/><rect x="0" y="11" width="15" height="3" rx="1.5" fill="#333"/></svg>
<div class="r" style="left:574px;top:311px;width:1px;height:23px;background:#dcdcd4;"></div>
<svg class="r" style="left:597px;top:314px;" width="18" height="17" viewBox="0 0 18 17"><ellipse cx="5" cy="2" rx="4.5" ry="1.5" fill="#8a8b84"/><rect x="0.5" y="2" width="9" height="10" fill="#8a8b84"/><path d="M0.5 5 H9.5 M0.5 8 H9.5" stroke="#fffef6"/><path d="M5 8 L15 12.5 L5 17 Z" fill="#6cc21f"/></svg>
<div class="t " style="left:618px;top:312px;height:20px;line-height:20px;font-size:11.3px;color:#000;letter-spacing:0.150px;">Begin Transaction</div>
<div class="r" style="left:722px;top:311px;width:1px;height:23px;background:#dcdcd4;"></div>
<svg class="r" style="left:734px;top:314px;" width="15" height="16" viewBox="0 0 15 16"><path d="M0.5 0.5 H10 L14.5 5 V15.5 H0.5 Z" fill="#fff" stroke="#333"/><path d="M3 4 H9 M3 7 H12 M3 10 H12 M3 13 H12" stroke="#3a7ab8"/></svg>
<div class="t " style="left:754px;top:312px;height:20px;line-height:20px;font-size:11.3px;color:#000;letter-spacing:0.402px;">Memo</div>
<svg class="r" style="left:795px;top:320px;" width="7" height="4" viewBox="0 0 7 4"><path d="M0 0 H7 L3.5 4 Z" fill="#222"/></svg>
<svg class="r" style="left:810px;top:314px;" width="16" height="16" viewBox="0 0 16 16"><rect x="0" y="0" width="16" height="2" fill="#3a7ab8"/><path d="M0 3 H16 L10 9 V15 L6 13 V9 Z" fill="#8a8f96"/></svg>
<div class="t " style="left:829px;top:312px;height:20px;line-height:20px;font-size:11.3px;color:#000;letter-spacing:0.315px;">Filter</div>
<svg class="r" style="left:863px;top:313px;" width="18" height="17" viewBox="0 0 18 17"><path d="M4 0 V12 M0.5 9 L4 14.5 L7.5 9 Z" stroke="#222" stroke-width="2" fill="#222"/><path d="M10 2 H17 M10 5 H17 M10 8 H17 M10 11 H17 M10 14 H17" stroke="#7fb0a8" stroke-width="1"/><path d="M10 5 H17" stroke="#d84a4a"/></svg>
<div class="t " style="left:884px;top:312px;height:20px;line-height:20px;font-size:11.3px;color:#000;letter-spacing:0.069px;">Sort</div>
<div class="r" style="left:918px;top:311px;width:1px;height:23px;background:#dcdcd4;"></div>
<svg class="r" style="left:928px;top:314px;" width="17" height="16" viewBox="0 0 17 16"><rect x="0.5" y="0.5" width="11" height="15" fill="#fff" stroke="#6f7068"/><path d="M1 4.5 H11 M1 8.5 H11 M1 12.5 H11 M4.5 1 V15" stroke="#8a8b84"/><path d="M8 8 L13 3.5 V6 H17 V10 H13 V12.5 Z" fill="#58b62c"/></svg>
<div class="t " style="left:948px;top:312px;height:20px;line-height:20px;font-size:11.3px;color:#000;letter-spacing:0.496px;">Import</div>
<svg class="r" style="left:993px;top:314px;" width="17" height="16" viewBox="0 0 17 16"><rect x="0.5" y="0.5" width="11" height="15" fill="#fff" stroke="#6f7068"/><path d="M1 4.5 H11 M1 8.5 H11 M1 12.5 H11 M4.5 1 V15" stroke="#8a8b84"/><path d="M17 8 L12 3.5 V6 H8 V10 H12 V12.5 Z" fill="#f0842c"/></svg>
<div class="t " style="left:1013px;top:312px;height:20px;line-height:20px;font-size:11.3px;color:#000;letter-spacing:0.390px;">Export</div>
<div class="r" style="left:859px;top:336px;width:302px;height:19px;background:#dcedf7;"></div>
<div class="r" style="left:533px;top:355px;width:878px;height:1px;background:#dcdcd4;"></div>
<div class="r" style="left:544px;top:336px;width:1px;height:19px;background:#dcdcd4;"></div>
<div class="r" style="left:617px;top:336px;width:1px;height:19px;background:#dcdcd4;"></div>
<div class="r" style="left:768px;top:336px;width:1px;height:19px;background:#dcdcd4;"></div>
<div class="r" style="left:859px;top:336px;width:1px;height:19px;background:#dcdcd4;"></div>
<div class="r" style="left:1010px;top:336px;width:1px;height:19px;background:#dcdcd4;"></div>
<div class="r" style="left:1161px;top:336px;width:1px;height:19px;background:#dcdcd4;"></div>
<div class="r" style="left:1250px;top:336px;width:1px;height:19px;background:#dcdcd4;"></div>
<div class="r" style="left:1338px;top:336px;width:1px;height:19px;background:#dcdcd4;"></div>
<div class="t " style="left:547px;top:337px;height:19px;line-height:19px;font-size:11.3px;color:#000;letter-spacing:-0.089px;">users_id</div>
<div class="t " style="left:620px;top:337px;height:19px;line-height:19px;font-size:11.3px;color:#000;letter-spacing:0.411px;">fullname</div>
<div class="t " style="left:771px;top:337px;height:19px;line-height:19px;font-size:11.3px;color:#000;letter-spacing:0.318px;">mobile_no</div>
<div class="t " style="left:862px;top:337px;height:19px;line-height:19px;font-size:11.3px;color:#000;letter-spacing:0.115px;">email_id</div>
<div class="t " style="left:1013px;top:337px;height:19px;line-height:19px;font-size:11.3px;color:#000;letter-spacing:0.205px;">password</div>
<div class="t " style="left:1164px;top:337px;height:19px;line-height:19px;font-size:11.3px;color:#000;letter-spacing:-0.037px;">user_status</div>
<div class="t " style="left:1253px;top:337px;height:19px;line-height:19px;font-size:11.3px;color:#000;letter-spacing:0.010px;">created_by</div>
<div class="t " style="left:1341px;top:337px;height:19px;line-height:19px;font-size:11.3px;color:#000;letter-spacing:0.191px;">last_updated</div>
<svg class="r" style="left:1146px;top:344px;" width="8" height="5" viewBox="0 0 8 5"><path d="M0 0 H8 L4 5 Z" fill="#111"/></svg>
<div class="r" style="left:544px;top:356px;width:1px;height:480px;background:#dcdcd4;"></div>
<div class="r" style="left:533px;top:375px;width:11px;height:1px;background:#dcdcd4;"></div>
<div class="r" style="left:533px;top:395px;width:11px;height:1px;background:#dcdcd4;"></div>
<div class="r" style="left:533px;top:415px;width:11px;height:1px;background:#dcdcd4;"></div>
<div class="r" style="left:533px;top:435px;width:11px;height:1px;background:#dcdcd4;"></div>
<div class="r" style="left:533px;top:455px;width:11px;height:1px;background:#dcdcd4;"></div>
<div class="r" style="left:545px;top:456px;width:866px;height:19px;background:#f1f9fd;"></div>
<div class="r" style="left:533px;top:475px;width:11px;height:1px;background:#dcdcd4;"></div>
<div class="r" style="left:533px;top:495px;width:11px;height:1px;background:#dcdcd4;"></div>
<div class="r" style="left:533px;top:515px;width:11px;height:1px;background:#dcdcd4;"></div>
<div class="r" style="left:533px;top:535px;width:11px;height:1px;background:#dcdcd4;"></div>
<div class="r" style="left:533px;top:555px;width:11px;height:1px;background:#dcdcd4;"></div>
<div class="r" style="left:533px;top:575px;width:11px;height:1px;background:#dcdcd4;"></div>
<div class="r" style="left:545px;top:576px;width:866px;height:19px;background:#f1f9fd;"></div>
<div class="r" style="left:533px;top:595px;width:11px;height:1px;background:#dcdcd4;"></div>
<div class="r" style="left:533px;top:615px;width:11px;height:1px;background:#dcdcd4;"></div>
<div class="r" style="left:533px;top:635px;width:11px;height:1px;background:#dcdcd4;"></div>
<div class="r" style="left:533px;top:655px;width:11px;height:1px;background:#dcdcd4;"></div>
<div class="r" style="left:533px;top:675px;width:11px;height:1px;background:#dcdcd4;"></div>
<div class="r" style="left:533px;top:695px;width:11px;height:1px;background:#dcdcd4;"></div>
<div class="r" style="left:545px;top:696px;width:866px;height:19px;background:#f1f9fd;"></div>
<div class="r" style="left:533px;top:715px;width:11px;height:1px;background:#dcdcd4;"></div>
<div class="r" style="left:533px;top:735px;width:11px;height:1px;background:#dcdcd4;"></div>
<div class="r" style="left:533px;top:755px;width:11px;height:1px;background:#dcdcd4;"></div>
<div class="r" style="left:533px;top:775px;width:11px;height:1px;background:#dcdcd4;"></div>
<div class="r" style="left:533px;top:795px;width:11px;height:1px;background:#dcdcd4;"></div>
<div class="r" style="left:533px;top:815px;width:11px;height:1px;background:#dcdcd4;"></div>
<div class="r" style="left:545px;top:816px;width:866px;height:19px;background:#f1f9fd;"></div>
<div class="r" style="left:533px;top:835px;width:11px;height:1px;background:#dcdcd4;"></div>
<div class="r" style="left:860px;top:356px;width:150px;height:19px;background:#0078d7;"></div>
<div class="t " style="right:1306px;top:356px;height:20px;line-height:20px;font-size:11.3px;color:#000;letter-spacing:-0.284px;">1662076</div>
<div class="t " style="left:620px;top:356px;height:20px;line-height:20px;font-size:11.3px;color:#000;letter-spacing:0.187px;">Virendra</div>
<div class="t " style="left:771px;top:356px;height:20px;line-height:20px;font-size:11.3px;color:#000;letter-spacing:-0.284px;">9601677183</div>
<div class="r" style="left:862px;top:356px;width:147px;height:20px;overflow:hidden;">
<div class="t " style="left:0px;top:0px;height:20px;line-height:20px;font-size:11.3px;color:#fff;letter-spacing:0.355px;">hr@kailashcorporation.com</div>
</div>
<div class="r" style="left:1013px;top:356px;width:148px;height:20px;overflow:hidden;">
<div class="t " style="left:0px;top:0px;height:20px;line-height:20px;font-size:11.3px;color:#000;letter-spacing:-0.133px;">1b41972c0ff0584c6670a24d9</div>
</div>
<div class="t " style="right:673px;top:356px;height:20px;line-height:20px;font-size:11.3px;color:#000;letter-spacing:-0.284px;">74</div>
<div class="t " style="right:586px;top:356px;height:20px;line-height:20px;font-size:11.3px;color:#c3bcd9;letter-spacing:0.501px;">(Null)</div>
<div class="t " style="right:1306px;top:376px;height:20px;line-height:20px;font-size:11.3px;color:#000;letter-spacing:-0.284px;">1662077</div>
<div class="t " style="left:620px;top:376px;height:20px;line-height:20px;font-size:11.3px;color:#000;letter-spacing:-1.116px;">RAJ</div>
<div class="t " style="left:771px;top:376px;height:20px;line-height:20px;font-size:11.3px;color:#000;letter-spacing:-0.284px;">3088827188</div>
<div class="r" style="left:862px;top:376px;width:147px;height:20px;overflow:hidden;">
<div class="t " style="left:0px;top:0px;height:20px;line-height:20px;font-size:11.3px;color:#000;letter-spacing:0.304px;">pratyush_89@yahoo.co.inininactive</div>
</div>
<div class="r" style="left:1013px;top:376px;width:148px;height:20px;overflow:hidden;">
<div class="t " style="left:0px;top:0px;height:20px;line-height:20px;font-size:11.3px;color:#000;letter-spacing:-0.227px;">772acc079160e7f881988d509</div>
</div>
<div class="t " style="right:673px;top:376px;height:20px;line-height:20px;font-size:11.3px;color:#000;letter-spacing:-0.284px;">74</div>
<div class="t " style="right:586px;top:376px;height:20px;line-height:20px;font-size:11.3px;color:#c3bcd9;letter-spacing:0.501px;">(Null)</div>
<div class="t " style="right:1306px;top:396px;height:20px;line-height:20px;font-size:11.3px;color:#000;letter-spacing:-0.284px;">1662078</div>
<div class="t " style="left:620px;top:396px;height:20px;line-height:20px;font-size:11.3px;color:#000;letter-spacing:0.170px;">Globe</div>
<div class="t " style="left:771px;top:396px;height:20px;line-height:20px;font-size:11.3px;color:#000;letter-spacing:-0.284px;">9515104654</div>
<div class="r" style="left:862px;top:396px;width:147px;height:20px;overflow:hidden;">
<div class="t " style="left:0px;top:0px;height:20px;line-height:20px;font-size:11.3px;color:#000;letter-spacing:0.304px;">karim@globeecologistics.com</div>
</div>
<div class="r" style="left:1013px;top:396px;width:148px;height:20px;overflow:hidden;">
<div class="t " style="left:0px;top:0px;height:20px;line-height:20px;font-size:11.3px;color:#000;letter-spacing:-0.187px;">c872e2d5c1fb39a8a93029641</div>
</div>
<div class="t " style="right:673px;top:396px;height:20px;line-height:20px;font-size:11.3px;color:#000;letter-spacing:-0.284px;">74</div>
<div class="t " style="right:586px;top:396px;height:20px;line-height:20px;font-size:11.3px;color:#c3bcd9;letter-spacing:0.501px;">(Null)</div>
<div class="t " style="right:1306px;top:416px;height:20px;line-height:20px;font-size:11.3px;color:#000;letter-spacing:-0.284px;">1662079</div>
<div class="t " style="left:620px;top:416px;height:20px;line-height:20px;font-size:11.3px;color:#000;letter-spacing:0.204px;">santosh</div>
<div class="t " style="left:771px;top:416px;height:20px;line-height:20px;font-size:11.3px;color:#000;letter-spacing:-0.284px;">8826224704</div>
<div class="r" style="left:862px;top:416px;width:147px;height:20px;overflow:hidden;">
<div class="t " style="left:0px;top:0px;height:20px;line-height:20px;font-size:11.3px;color:#000;letter-spacing:0.176px;">akncoc192@gmail.com</div>
</div>
<div class="r" style="left:1013px;top:416px;width:148px;height:20px;overflow:hidden;">
<div class="t " style="left:0px;top:0px;height:20px;line-height:20px;font-size:11.3px;color:#000;letter-spacing:-0.202px;">86cc620424955c7df7d814964</div>
</div>
<div class="t " style="right:673px;top:416px;height:20px;line-height:20px;font-size:11.3px;color:#000;letter-spacing:-0.284px;">74</div>
<div class="t " style="right:586px;top:416px;height:20px;line-height:20px;font-size:11.3px;color:#c3bcd9;letter-spacing:0.501px;">(Null)</div>
<div class="t " style="right:1306px;top:436px;height:20px;line-height:20px;font-size:11.3px;color:#000;letter-spacing:-0.284px;">1662080</div>
<div class="t " style="left:771px;top:436px;height:20px;line-height:20px;font-size:11.3px;color:#000;letter-spacing:-0.284px;">9855800670</div>
<div class="r" style="left:862px;top:436px;width:147px;height:20px;overflow:hidden;">
<div class="t " style="left:0px;top:0px;height:20px;line-height:20px;font-size:11.3px;color:#000;letter-spacing:0.343px;">Bhuwansingla@rocketmail.com</div>
</div>
<div class="r" style="left:1013px;top:436px;width:148px;height:20px;overflow:hidden;">
<div class="t " style="left:0px;top:0px;height:20px;line-height:20px;font-size:11.3px;color:#000;letter-spacing:-0.065px;">134da09ef55f6c9e4d006defc4</div>
</div>
<div class="t " style="right:673px;top:436px;height:20px;line-height:20px;font-size:11.3px;color:#000;letter-spacing:-0.284px;">74</div>
<div class="t " style="right:586px;top:436px;height:20px;line-height:20px;font-size:11.3px;color:#c3bcd9;letter-spacing:0.501px;">(Null)</div>
<div class="t " style="right:1306px;top:456px;height:20px;line-height:20px;font-size:11.3px;color:#000;letter-spacing:-0.284px;">1662081</div>
<div class="t " style="left:771px;top:456px;height:20px;line-height:20px;font-size:11.3px;color:#000;letter-spacing:-0.284px;">7600025079</div>
<div class="r" style="left:862px;top:456px;width:147px;height:20px;overflow:hidden;">
<div class="t " style="left:0px;top:0px;height:20px;line-height:20px;font-size:11.3px;color:#000;letter-spacing:-0.085px;">INFO@AMBICAPRESS.COMinactive</div>
</div>
<div class="r" style="left:1013px;top:456px;width:148px;height:20px;overflow:hidden;">
<div class="t " style="left:0px;top:0px;height:20px;line-height:20px;font-size:11.3px;color:#000;letter-spacing:-0.187px;">7038680593c79d6678bcf5a81</div>
</div>
<div class="t " style="right:673px;top:456px;height:20px;line-height:20px;font-size:11.3px;color:#000;letter-spacing:-0.284px;">74</div>
<div class="t " style="right:586px;top:456px;height:20px;line-height:20px;font-size:11.3px;color:#c3bcd9;letter-spacing:0.501px;">(Null)</div>
<div class="t " style="right:1306px;top:476px;height:20px;line-height:20px;font-size:11.3px;color:#000;letter-spacing:-0.284px;">1662082</div>
<div class="t " style="left:771px;top:476px;height:20px;line-height:20px;font-size:11.3px;color:#000;letter-spacing:-0.284px;">9999379044</div>
<div class="r" style="left:862px;top:476px;width:147px;height:20px;overflow:hidden;">
<div class="t " style="left:0px;top:0px;height:20px;line-height:20px;font-size:11.3px;color:#000;letter-spacing:0.378px;">govilrishi@gmail.cominactive</div>
</div>
<div class="r" style="left:1013px;top:476px;width:148px;height:20px;overflow:hidden;">
<div class="t " style="left:0px;top:0px;height:20px;line-height:20px;font-size:11.3px;color:#000;letter-spacing:-0.113px;">7a9822ba20da09d29cab11c2</div>
</div>
<div class="t " style="right:673px;top:476px;height:20px;line-height:20px;font-size:11.3px;color:#000;letter-spacing:-0.284px;">74</div>
<div class="t " style="right:586px;top:476px;height:20px;line-height:20px;font-size:11.3px;color:#c3bcd9;letter-spacing:0.501px;">(Null)</div>
<div class="t " style="right:1306px;top:496px;height:20px;line-height:20px;font-size:11.3px;color:#000;letter-spacing:-0.284px;">1662083</div>
<div class="t " style="left:620px;top:496px;height:20px;line-height:20px;font-size:11.3px;color:#000;letter-spacing:0.074px;">ANIRUDH</div>
<div class="t " style="left:771px;top:496px;height:20px;line-height:20px;font-size:11.3px;color:#000;letter-spacing:-0.284px;">7069014088</div>
<div class="r" style="left:862px;top:496px;width:147px;height:20px;overflow:hidden;">
<div class="t " style="left:0px;top:0px;height:20px;line-height:20px;font-size:11.3px;color:#000;letter-spacing:0.344px;">anrudh.afcons@gmail.com</div>
</div>
<div class="r" style="left:1013px;top:496px;width:148px;height:20px;overflow:hidden;">
<div class="t " style="left:0px;top:0px;height:20px;line-height:20px;font-size:11.3px;color:#000;letter-spacing:-0.097px;">1316fc2758af510ac7796afb5f</div>
</div>
<div class="t " style="right:673px;top:496px;height:20px;line-height:20px;font-size:11.3px;color:#000;letter-spacing:-0.284px;">74</div>
<div class="t " style="right:586px;top:496px;height:20px;line-height:20px;font-size:11.3px;color:#c3bcd9;letter-spacing:0.501px;">(Null)</div>
<div class="t " style="right:1306px;top:516px;height:20px;line-height:20px;font-size:11.3px;color:#000;letter-spacing:-0.284px;">1662084</div>
<div class="t " style="left:771px;top:516px;height:20px;line-height:20px;font-size:11.3px;color:#000;letter-spacing:-0.284px;">9820195031</div>
<div class="r" style="left:862px;top:516px;width:147px;height:20px;overflow:hidden;">
<div class="t " style="left:0px;top:0px;height:20px;line-height:20px;font-size:11.3px;color:#000;letter-spacing:0.071px;">NITIN@A3TL.COMinactive</div>
</div>
<div class="r" style="left:1013px;top:516px;width:148px;height:20px;overflow:hidden;">
<div class="t " style="left:0px;top:0px;height:20px;line-height:20px;font-size:11.3px;color:#000;letter-spacing:-0.202px;">ce07c156175d3c168f75e0d99</div>
</div>
<div class="t " style="right:673px;top:516px;height:20px;line-height:20px;font-size:11.3px;color:#000;letter-spacing:-0.284px;">74</div>
<div class="t " style="right:586px;top:516px;height:20px;line-height:20px;font-size:11.3px;color:#c3bcd9;letter-spacing:0.501px;">(Null)</div>
<div class="t " style="right:1306px;top:536px;height:20px;line-height:20px;font-size:11.3px;color:#000;letter-spacing:-0.284px;">1662085</div>
<div class="t " style="left:620px;top:536px;height:20px;line-height:20px;font-size:11.3px;color:#000;letter-spacing:-0.362px;">KUSUM</div>
<div class="t " style="left:771px;top:536px;height:20px;line-height:20px;font-size:11.3px;color:#000;letter-spacing:-0.284px;">9450036025</div>
<div class="r" style="left:862px;top:536px;width:147px;height:20px;overflow:hidden;">
<div class="t " style="left:0px;top:0px;height:20px;line-height:20px;font-size:11.3px;color:#000;letter-spacing:0.302px;">khurshedalam23@gmail.com</div>
</div>
<div class="r" style="left:1013px;top:536px;width:148px;height:20px;overflow:hidden;">
<div class="t " style="left:0px;top:0px;height:20px;line-height:20px;font-size:11.3px;color:#000;letter-spacing:-0.132px;">d0730e80242b3c7780ed60d9</div>
</div>
<div class="t " style="right:673px;top:536px;height:20px;line-height:20px;font-size:11.3px;color:#000;letter-spacing:-0.284px;">74</div>
<div class="t " style="right:586px;top:536px;height:20px;line-height:20px;font-size:11.3px;color:#c3bcd9;letter-spacing:0.501px;">(Null)</div>
<div class="t " style="right:1306px;top:556px;height:20px;line-height:20px;font-size:11.3px;color:#000;letter-spacing:-0.284px;">1662086</div>
<div class="t " style="left:620px;top:556px;height:20px;line-height:20px;font-size:11.3px;color:#000;letter-spacing:-0.003px;">Renu</div>
<div class="t " style="left:771px;top:556px;height:20px;line-height:20px;font-size:11.3px;color:#000;letter-spacing:-0.284px;">9999596142</div>
<div class="r" style="left:862px;top:556px;width:147px;height:20px;overflow:hidden;">
<div class="t " style="left:0px;top:0px;height:20px;line-height:20px;font-size:11.3px;color:#000;letter-spacing:0.333px;">renu.khurana@jakleather.com</div>
</div>
<div class="r" style="left:1013px;top:556px;width:148px;height:20px;overflow:hidden;">
<div class="t " style="left:0px;top:0px;height:20px;line-height:20px;font-size:11.3px;color:#000;letter-spacing:-0.133px;">78f4b97ad46050d237ec94736</div>
</div>
<div class="t " style="right:673px;top:556px;height:20px;line-height:20px;font-size:11.3px;color:#000;letter-spacing:-0.284px;">74</div>
<div class="t " style="right:586px;top:556px;height:20px;line-height:20px;font-size:11.3px;color:#c3bcd9;letter-spacing:0.501px;">(Null)</div>
<div class="t " style="right:1306px;top:576px;height:20px;line-height:20px;font-size:11.3px;color:#000;letter-spacing:-0.284px;">1662087</div>
<div class="t " style="left:620px;top:576px;height:20px;line-height:20px;font-size:11.3px;color:#000;letter-spacing:-0.462px;">JAYKUMAR</div>
<div class="t " style="left:771px;top:576px;height:20px;line-height:20px;font-size:11.3px;color:#000;letter-spacing:-0.284px;">7722018283</div>
<div class="r" style="left:862px;top:576px;width:147px;height:20px;overflow:hidden;">
<div class="t " style="left:0px;top:0px;height:20px;line-height:20px;font-size:11.3px;color:#000;letter-spacing:0.293px;">prachee.bora@manikprem.com</div>
</div>
<div class="r" style="left:1013px;top:576px;width:148px;height:20px;overflow:hidden;">
<div class="t " style="left:0px;top:0px;height:20px;line-height:20px;font-size:11.3px;color:#000;letter-spacing:-0.202px;">558666efcab653b39e2c63e8c</div>
</div>
<div class="t " style="right:673px;top:576px;height:20px;line-height:20px;font-size:11.3px;color:#000;letter-spacing:-0.284px;">74</div>
<div class="t " style="right:586px;top:576px;height:20px;line-height:20px;font-size:11.3px;color:#c3bcd9;letter-spacing:0.501px;">(Null)</div>
<div class="t " style="right:1306px;top:596px;height:20px;line-height:20px;font-size:11.3px;color:#000;letter-spacing:-0.284px;">1662088</div>
<div class="t " style="left:771px;top:596px;height:20px;line-height:20px;font-size:11.3px;color:#000;letter-spacing:-0.284px;">9401039488</div>
<div class="r" style="left:862px;top:596px;width:147px;height:20px;overflow:hidden;">
<div class="t " style="left:0px;top:0px;height:20px;line-height:20px;font-size:11.3px;color:#000;letter-spacing:0.288px;">pijush_halder56@Yahoo.com</div>
</div>
<div class="r" style="left:1013px;top:596px;width:148px;height:20px;overflow:hidden;">
<div class="t " style="left:0px;top:0px;height:20px;line-height:20px;font-size:11.3px;color:#000;letter-spacing:-0.008px;">198d93ff4c29fca3620dd3d56</div>
</div>
<div class="t " style="right:673px;top:596px;height:20px;line-height:20px;font-size:11.3px;color:#000;letter-spacing:-0.284px;">74</div>
<div class="t " style="right:586px;top:596px;height:20px;line-height:20px;font-size:11.3px;color:#c3bcd9;letter-spacing:0.501px;">(Null)</div>
<div class="t " style="right:1306px;top:616px;height:20px;line-height:20px;font-size:11.3px;color:#000;letter-spacing:-0.284px;">1662089</div>
<div class="t " style="left:620px;top:616px;height:20px;line-height:20px;font-size:11.3px;color:#000;letter-spacing:-0.322px;">SUDHEER</div>
<div class="t " style="left:771px;top:616px;height:20px;line-height:20px;font-size:11.3px;color:#000;letter-spacing:-0.284px;">9922995190</div>
<div class="r" style="left:862px;top:616px;width:147px;height:20px;overflow:hidden;">
<div class="t " style="left:0px;top:0px;height:20px;line-height:20px;font-size:11.3px;color:#000;letter-spacing:0.325px;">sudheer.vaidya@kfil.com</div>
</div>
<div class="r" style="left:1013px;top:616px;width:148px;height:20px;overflow:hidden;">
<div class="t " style="left:0px;top:0px;height:20px;line-height:20px;font-size:11.3px;color:#000;letter-spacing:0.010px;">0c9fdbd0dc974d183acbb058</div>
</div>
<div class="t " style="right:673px;top:616px;height:20px;line-height:20px;font-size:11.3px;color:#000;letter-spacing:-0.284px;">74</div>
<div class="t " style="right:586px;top:616px;height:20px;line-height:20px;font-size:11.3px;color:#c3bcd9;letter-spacing:0.501px;">(Null)</div>
<div class="t " style="right:1306px;top:636px;height:20px;line-height:20px;font-size:11.3px;color:#000;letter-spacing:-0.284px;">1662090</div>
<div class="t " style="left:620px;top:636px;height:20px;line-height:20px;font-size:11.3px;color:#000;letter-spacing:-0.088px;">ANITA</div>
<div class="t " style="left:771px;top:636px;height:20px;line-height:20px;font-size:11.3px;color:#000;letter-spacing:-0.200px;">9811237222</div>
<div class="r" style="left:862px;top:636px;width:147px;height:20px;overflow:hidden;">
<div class="t " style="left:0px;top:0px;height:20px;line-height:20px;font-size:11.3px;color:#000;letter-spacing:0.018px;">YADAVMAHESH391@GMAIL.COM</div>
</div>
<div class="r" style="left:1013px;top:636px;width:148px;height:20px;overflow:hidden;">
<div class="t " style="left:0px;top:0px;height:20px;line-height:20px;font-size:11.3px;color:#000;letter-spacing:-0.152px;">364a97764a3af97857e7f3d69</div>
</div>
<div class="t " style="right:673px;top:636px;height:20px;line-height:20px;font-size:11.3px;color:#000;letter-spacing:-0.284px;">74</div>
<div class="t " style="right:586px;top:636px;height:20px;line-height:20px;font-size:11.3px;color:#c3bcd9;letter-spacing:0.501px;">(Null)</div>
<div class="t " style="right:1306px;top:656px;height:20px;line-height:20px;font-size:11.3px;color:#000;letter-spacing:-0.284px;">1662091</div>
<div class="t " style="left:620px;top:656px;height:20px;line-height:20px;font-size:11.3px;color:#000;letter-spacing:-0.519px;">JIYARUL</div>
<div class="t " style="left:771px;top:656px;height:20px;line-height:20px;font-size:11.3px;color:#000;letter-spacing:-0.284px;">9038194784</div>
<div class="r" style="left:862px;top:656px;width:147px;height:20px;overflow:hidden;">
<div class="t " style="left:0px;top:0px;height:20px;line-height:20px;font-size:11.3px;color:#000;letter-spacing:0.419px;">etaxationpritam@gmail.com</div>
</div>
<div class="r" style="left:1013px;top:656px;width:148px;height:20px;overflow:hidden;">
<div class="t " style="left:0px;top:0px;height:20px;line-height:20px;font-size:11.3px;color:#000;letter-spacing:-0.087px;">5bb847dc369712561a62fe0af</div>
</div>
<div class="t " style="right:673px;top:656px;height:20px;line-height:20px;font-size:11.3px;color:#000;letter-spacing:-0.284px;">74</div>
<div class="t " style="right:586px;top:656px;height:20px;line-height:20px;font-size:11.3px;color:#c3bcd9;letter-spacing:0.501px;">(Null)</div>
<div class="t " style="right:1306px;top:676px;height:20px;line-height:20px;font-size:11.3px;color:#000;letter-spacing:-0.284px;">1662092</div>
<div class="t " style="left:771px;top:676px;height:20px;line-height:20px;font-size:11.3px;color:#000;letter-spacing:-0.284px;">9712981383</div>
<div class="r" style="left:862px;top:676px;width:147px;height:20px;overflow:hidden;">
<div class="t " style="left:0px;top:0px;height:20px;line-height:20px;font-size:11.3px;color:#000;letter-spacing:0.097px;">ABC@YAHOO.COMinactive</div>
</div>
<div class="r" style="left:1013px;top:676px;width:148px;height:20px;overflow:hidden;">
<div class="t " style="left:0px;top:0px;height:20px;line-height:20px;font-size:11.3px;color:#000;letter-spacing:-0.064px;">bb6b3b4bc95436b43c266549</div>
</div>
<div class="t " style="right:673px;top:676px;height:20px;line-height:20px;font-size:11.3px;color:#000;letter-spacing:-0.284px;">74</div>
<div class="t " style="right:586px;top:676px;height:20px;line-height:20px;font-size:11.3px;color:#c3bcd9;letter-spacing:0.501px;">(Null)</div>
<div class="t " style="right:1306px;top:696px;height:20px;line-height:20px;font-size:11.3px;color:#000;letter-spacing:-0.284px;">1662093</div>
<div class="t " style="left:620px;top:696px;height:20px;line-height:20px;font-size:11.3px;color:#000;letter-spacing:-0.310px;">JATIN</div>
<div class="t " style="left:771px;top:696px;height:20px;line-height:20px;font-size:11.3px;color:#000;letter-spacing:-0.200px;">9811206723</div>
<div class="r" style="left:862px;top:696px;width:147px;height:20px;overflow:hidden;">
<div class="t " style="left:0px;top:0px;height:20px;line-height:20px;font-size:11.3px;color:#000;letter-spacing:0.033px;">AB@GMAIL.COMinactive</div>
</div>
<div class="r" style="left:1013px;top:696px;width:148px;height:20px;overflow:hidden;">
<div class="t " style="left:0px;top:0px;height:20px;line-height:20px;font-size:11.3px;color:#000;letter-spacing:-0.087px;">f1207e85ba60c6138274dd7f8</div>
</div>
<div class="t " style="right:673px;top:696px;height:20px;line-height:20px;font-size:11.3px;color:#000;letter-spacing:-0.284px;">74</div>
<div class="t " style="right:586px;top:696px;height:20px;line-height:20px;font-size:11.3px;color:#c3bcd9;letter-spacing:0.501px;">(Null)</div>
<div class="t " style="right:1306px;top:716px;height:20px;line-height:20px;font-size:11.3px;color:#000;letter-spacing:-0.284px;">1097248</div>
<div class="t " style="left:620px;top:716px;height:20px;line-height:20px;font-size:11.3px;color:#000;letter-spacing:0.266px;">Aditya</div>
<div class="t " style="left:771px;top:716px;height:20px;line-height:20px;font-size:11.3px;color:#000;letter-spacing:-0.284px;">8087555595</div>
<div class="r" style="left:862px;top:716px;width:147px;height:20px;overflow:hidden;">
<div class="t " style="left:0px;top:0px;height:20px;line-height:20px;font-size:11.3px;color:#000;letter-spacing:0.210px;">sanjay_kishan@gmail.com</div>
</div>
<div class="t " style="right:673px;top:716px;height:20px;line-height:20px;font-size:11.3px;color:#000;letter-spacing:-0.284px;">74</div>
<div class="t " style="right:586px;top:716px;height:20px;line-height:20px;font-size:11.3px;color:#c3bcd9;letter-spacing:0.501px;">(Null)</div>
<div class="t " style="right:1306px;top:736px;height:20px;line-height:20px;font-size:11.3px;color:#000;letter-spacing:-0.284px;">1097242</div>
<div class="t " style="left:620px;top:736px;height:20px;line-height:20px;font-size:11.3px;color:#000;letter-spacing:-0.309px;">FIRST MIDDAL LAST</div>
<div class="t " style="left:771px;top:736px;height:20px;line-height:20px;font-size:11.3px;color:#000;letter-spacing:-0.284px;">9762277520</div>
<div class="r" style="left:862px;top:736px;width:147px;height:20px;overflow:hidden;">
<div class="t " style="left:0px;top:0px;height:20px;line-height:20px;font-size:11.3px;color:#000;letter-spacing:0.415px;">kapilbbhatnagar@gmail.com</div>
</div>
<div class="t " style="right:673px;top:736px;height:20px;line-height:20px;font-size:11.3px;color:#000;letter-spacing:-0.284px;">71</div>
<div class="t " style="right:586px;top:736px;height:20px;line-height:20px;font-size:11.3px;color:#c3bcd9;letter-spacing:0.501px;">(Null)</div>
<div class="t " style="right:1306px;top:756px;height:20px;line-height:20px;font-size:11.3px;color:#000;letter-spacing:-0.284px;">1097241</div>
<div class="t " style="left:620px;top:756px;height:20px;line-height:20px;font-size:11.3px;color:#000;letter-spacing:-0.309px;">FIRST MIDDAL LAST</div>
<div class="t " style="left:771px;top:756px;height:20px;line-height:20px;font-size:11.3px;color:#000;letter-spacing:-0.284px;">8055564354</div>
<div class="r" style="left:862px;top:756px;width:147px;height:20px;overflow:hidden;">
<div class="t " style="left:0px;top:0px;height:20px;line-height:20px;font-size:11.3px;color:#000;letter-spacing:0.301px;">anandpagre12@gmail.com</div>
</div>
<div class="t " style="right:673px;top:756px;height:20px;line-height:20px;font-size:11.3px;color:#000;letter-spacing:-0.284px;">71</div>
<div class="t " style="right:586px;top:756px;height:20px;line-height:20px;font-size:11.3px;color:#c3bcd9;letter-spacing:0.501px;">(Null)</div>
<div class="t " style="right:1306px;top:776px;height:20px;line-height:20px;font-size:11.3px;color:#000;letter-spacing:-0.284px;">1097243</div>
<div class="t " style="left:620px;top:776px;height:20px;line-height:20px;font-size:11.3px;color:#000;letter-spacing:-0.309px;">FIRST MIDDAL LAST</div>
<div class="t " style="left:771px;top:776px;height:20px;line-height:20px;font-size:11.3px;color:#000;letter-spacing:-0.284px;">9423106928</div>
<div class="r" style="left:862px;top:776px;width:147px;height:20px;overflow:hidden;">
<div class="t " style="left:0px;top:0px;height:20px;line-height:20px;font-size:11.3px;color:#000;letter-spacing:0.333px;">maulianil01@gmail.com</div>
</div>
<div class="t " style="right:673px;top:776px;height:20px;line-height:20px;font-size:11.3px;color:#000;letter-spacing:-0.284px;">71</div>
<div class="t " style="right:586px;top:776px;height:20px;line-height:20px;font-size:11.3px;color:#c3bcd9;letter-spacing:0.501px;">(Null)</div>
<div class="t " style="right:1306px;top:796px;height:20px;line-height:20px;font-size:11.3px;color:#000;letter-spacing:-0.284px;">1097245</div>
<div class="t " style="left:620px;top:796px;height:20px;line-height:20px;font-size:11.3px;color:#000;letter-spacing:-0.309px;">FIRST MIDDAL LAST</div>
<div class="t " style="left:771px;top:796px;height:20px;line-height:20px;font-size:11.3px;color:#000;letter-spacing:-0.284px;">7770093818</div>
<div class="r" style="left:862px;top:796px;width:147px;height:20px;overflow:hidden;">
<div class="t " style="left:0px;top:0px;height:20px;line-height:20px;font-size:11.3px;color:#000;letter-spacing:0.178px;">123jha20117@gmail.com</div>
</div>
<div class="t " style="right:673px;top:796px;height:20px;line-height:20px;font-size:11.3px;color:#000;letter-spacing:-0.284px;">71</div>
<div class="t " style="right:586px;top:796px;height:20px;line-height:20px;font-size:11.3px;color:#c3bcd9;letter-spacing:0.501px;">(Null)</div>
<div class="t " style="right:1306px;top:816px;height:20px;line-height:20px;font-size:11.3px;color:#000;letter-spacing:-0.284px;">1097254</div>
<div class="t " style="left:620px;top:816px;height:20px;line-height:20px;font-size:11.3px;color:#000;letter-spacing:-0.309px;">FIRST MIDDAL LAST</div>
<div class="t " style="left:771px;top:816px;height:20px;line-height:20px;font-size:11.3px;color:#000;letter-spacing:-0.284px;">9421313124</div>
<div class="r" style="left:862px;top:816px;width:147px;height:20px;overflow:hidden;">
<div class="t " style="left:0px;top:0px;height:20px;line-height:20px;font-size:11.3px;color:#000;letter-spacing:0.196px;">sb88@gmail.com</div>
</div>
<div class="t " style="right:673px;top:816px;height:20px;line-height:20px;font-size:11.3px;color:#000;letter-spacing:-0.284px;">71</div>
<div class="t " style="right:586px;top:816px;height:20px;line-height:20px;font-size:11.3px;color:#c3bcd9;letter-spacing:0.501px;">(Null)</div>
<div class="r" style="left:533px;top:356px;width:11px;height:19px;background:#dcedf7;"></div>
<svg class="r" style="left:536px;top:360px;" width="6" height="11" viewBox="0 0 6 11"><path d="M0.5 0.5 L5.5 5.5 L0.5 10.5 Z" fill="#000"/></svg>
<div class="r" style="left:1411px;top:356px;width:15px;height:14px;background:#cdcec6;"></div>
<div class="r" style="left:1365px;top:336px;width:64px;height:25px;background:rgba(236,236,236,0.3);"></div>
<svg class="r" style="left:1414px;top:340px;" width="8" height="6" viewBox="0 0 8 6"><path d="M1 5 L4 1.5 L7 5" fill="none" stroke="#555" stroke-width="1.4"/></svg>
<svg class="r" style="left:1414px;top:825px;" width="8" height="6" viewBox="0 0 8 6"><path d="M1 1 L4 4.5 L7 1" fill="none" stroke="#555" stroke-width="1.4"/></svg>
<svg class="r" style="left:538px;top:840px;" width="6" height="9" viewBox="0 0 6 9"><path d="M5 1 L1.5 4.5 L5 8" fill="none" stroke="#555" stroke-width="1.4"/></svg>
<div class="r" style="left:550px;top:837px;width:17px;height:15px;background:#cdcec6;"></div>
<svg class="r" style="left:1398px;top:839px;" width="6" height="9" viewBox="0 0 6 9"><path d="M1 1 L4.5 4.5 L1 8" fill="none" stroke="#555" stroke-width="1.4"/></svg>
<svg class="r" style="left:540px;top:859px;" width="11" height="11" viewBox="0 0 11 11"><path d="M5.5 0 V11 M0 5.5 H11" stroke="#111" stroke-width="2.6"/></svg>
<div class="r" style="left:564px;top:863px;width:10px;height:3px;background:#111;"></div>
<svg class="r" style="left:588px;top:859px;" width="11" height="11" viewBox="0 0 11 11"><path d="M1 6 L4 9.5 L10 1" fill="none" stroke="#c8c9c0" stroke-width="2.4"/></svg>
<svg class="r" style="left:612px;top:859px;" width="11" height="11" viewBox="0 0 11 11"><path d="M1 1 L10 10 M10 1 L1 10" stroke="#c8c9c0" stroke-width="2.6"/></svg>
<svg class="r" style="left:636px;top:858px;" width="11" height="12" viewBox="0 0 11 12"><path d="M9 4 A4.5 4.5 0 1 0 9.5 8" fill="none" stroke="#111" stroke-width="2.2"/><path d="M6 0.5 L11 0.5 L11 5.5 Z" fill="#111"/></svg>
<svg class="r" style="left:660px;top:859px;" width="11" height="11" viewBox="0 0 11 11"><circle cx="5.5" cy="5.5" r="4.3" fill="none" stroke="#111" stroke-width="2"/><path d="M2.5 2.5 L8.5 8.5" stroke="#111" stroke-width="2"/></svg>
<svg class="r" style="left:1229px;top:859px;" width="12" height="10" viewBox="0 0 12 10"><rect x="0" y="0" width="2" height="10" fill="#111"/><path d="M2 5 L7 0 V3 H12 V7 H7 V10 Z" fill="#111"/></svg>
<svg class="r" style="left:1253px;top:859px;" width="11" height="10" viewBox="0 0 11 10"><path d="M0 5 L5 0 V3 H11 V7 H5 V10 Z" fill="#111"/></svg>
<div class="t " style="left:1280px;top:854px;height:20px;line-height:20px;font-size:11.3px;color:#000;">1</div>
<svg class="r" style="left:1301px;top:859px;" width="11" height="10" viewBox="0 0 11 10"><path d="M11 5 L6 0 V3 H0 V7 H6 V10 Z" fill="#111"/></svg>
<svg class="r" style="left:1325px;top:859px;" width="12" height="10" viewBox="0 0 12 10"><rect x="10" y="0" width="2" height="10" fill="#111"/><path d="M10 5 L5 0 V3 H0 V7 H5 V10 Z" fill="#111"/></svg>
<svg class="r" style="left:1349px;top:858px;" width="12" height="12" viewBox="0 0 12 12"><circle cx="6" cy="6" r="3.8" fill="none" stroke="#111" stroke-width="2.6"/><path d="M6 0 V12 M0 6 H12 M1.8 1.8 L10.2 10.2 M10.2 1.8 L1.8 10.2" stroke="#111" stroke-width="2"/><circle cx="6" cy="6" r="1.5" fill="#fffef6"/></svg>
<div class="r" style="left:1373px;top:854px;width:1px;height:20px;background:#dcdcd4;"></div>
<div class="r" style="left:1376px;top:853px;width:23px;height:21px;background:#c8e2f6;"></div>
<svg class="r" style="left:1380px;top:857px;" width="16" height="15" viewBox="0 0 16 15"><rect x="0.75" y="0.75" width="14.5" height="13.5" fill="#fff" stroke="#3f4a4e" stroke-width="1.3"/><rect x="0" y="0" width="16" height="1.6" fill="#3f4a4e"/><path d="M1 5.5 H15 M1 10 H15 M5.5 1 V14 M10.5 1 V14" stroke="#9a9a94" stroke-width="0.9"/></svg>
<svg class="r" style="left:1402px;top:857px;" width="16" height="15" viewBox="0 0 16 15"><rect x="0.75" y="0.75" width="14.5" height="13.5" fill="#fff" stroke="#55564e" stroke-width="1.3"/><rect x="0" y="0" width="16" height="2" fill="#55564e"/><path d="M2.5 4 V6.5 M2.5 8.5 V11" stroke="#77786f" stroke-width="0.9"/><rect x="4.5" y="4" width="9" height="2.5" fill="none" stroke="#77786f" stroke-width="0.9"/><rect x="4.5" y="8.5" width="9" height="2.5" fill="none" stroke="#77786f" stroke-width="0.9"/></svg>
<div class="r" style="left:532px;top:877px;width:1px;height:20px;background:#dcdcd4;"></div>
<div class="t " style="left:539px;top:876px;height:20px;line-height:20px;font-size:11.3px;color:#000;letter-spacing:-0.210px;">SELECT * FROM &quot;users&quot;.&quot;users&quot; LIMIT 1000 OFFSET 0</div>
<div class="r" style="left:1268px;top:877px;width:1px;height:20px;background:#dcdcd4;"></div>
<div class="r" style="left:1338px;top:877px;width:1px;height:20px;background:#dcdcd4;"></div>
<div class="t " style="left:1343px;top:876px;height:20px;line-height:20px;font-size:11.3px;color:#000;letter-spacing:0.026px;">Record 1 of 1000 in page 1</div>
<div class="r" style="left:1587px;top:877px;width:1px;height:20px;background:#dcdcd4;"></div>
<div class="r" style="left:1592px;top:876px;width:46px;height:20px;background:#c8e2f6;"></div>
<div class="r" style="left:1614px;top:876px;width:1px;height:20px;background:#e8f2fa;"></div>
<svg class="r" style="left:1599px;top:881px;" width="12" height="12" viewBox="0 0 12 12"><rect x="0.6" y="0.6" width="10.8" height="10.8" fill="none" stroke="#55564e" stroke-width="1.2"/><rect x="2" y="2" width="2" height="8" fill="#55564e"/></svg>
<svg class="r" style="left:1622px;top:881px;" width="12" height="12" viewBox="0 0 12 12"><rect x="0.6" y="0.6" width="10.8" height="10.8" fill="none" stroke="#55564e" stroke-width="1.2"/><rect x="8" y="2" width="2" height="8" fill="#55564e"/></svg>
<div class="t " style="left:1477px;top:567px;height:20px;line-height:20px;font-size:13px;color:#9c9c9c;letter-spacing:0.023px;">No activity available.</div>
<div class="r" style="left:277px;top:897px;width:901px;height:40px;background:#22343a;"></div>
<div class="r" style="left:1178px;top:897px;width:92px;height:40px;background:#1f3641;"></div>
<div class="r" style="left:1270px;top:897px;width:373px;height:40px;background:#171e40;"></div>
<svg class="r" style="left:290px;top:908px;" width="18" height="18" viewBox="0 0 18 18"><path d="M0 2.5 L7.5 1.4 V8.5 H0 Z M8.5 1.2 L18 0 V8.5 H8.5 Z M0 9.5 H7.5 V16.6 L0 15.5 Z M8.5 9.5 H18 V18 L8.5 16.8 Z" fill="#fff"/></svg>
<svg class="r" style="left:340px;top:908px;" width="18" height="18" viewBox="0 0 18 18"><circle cx="11" cy="7" r="6" fill="none" stroke="#fff" stroke-width="1.6"/><path d="M6.5 11.5 L1 17" stroke="#fff" stroke-width="1.8"/></svg>
<svg class="r" style="left:388px;top:908px;" width="18" height="18" viewBox="0 0 18 18"><circle cx="9" cy="9" r="7.2" fill="none" stroke="#fff" stroke-width="2"/></svg>
<svg class="r" style="left:436px;top:908px;" width="18" height="18" viewBox="0 0 18 18"><rect x="2" y="4" width="11" height="9" fill="none" stroke="#fff" stroke-width="1.5"/><path d="M0 1 H15 M0 16 H15 M16 3 V6 M16 8 V11 M16 13 V15" stroke="#fff" stroke-width="1.5"/></svg>
<svg class="r" style="left:483px;top:907px;" width="24" height="22" viewBox="0 0 24 22"><path d="M0 3 H9 L11 5 H24 V21 H0 Z" fill="#e9b730"/><rect x="0" y="7" width="24" height="14" fill="#fad25c"/><rect x="7" y="14" width="10" height="7" fill="#3c8fde"/><rect x="10" y="17" width="4" height="4" fill="#fad25c"/></svg>
<svg class="r" style="left:534px;top:906px;" width="22" height="24" viewBox="0 0 22 24"><path d="M11 0 L22 5 V18 L11 24 L0 18 V5 Z" fill="#6d8ed8"/><path d="M11 0 L22 5 L11 10 L0 5 Z" fill="#e5ecf8"/><path d="M0 5 L11 10 V24 L0 18 Z" fill="#a8bde8"/><path d="M11 10 L22 5 V18 L11 24 Z" fill="#c9d6f1"/></svg>
<svg class="r" style="left:581px;top:905px;" width="24" height="24" viewBox="0 0 24 24"><circle cx="12" cy="13" r="10.5" fill="#f2632a"/><circle cx="12" cy="13" r="6" fill="#7b2fd0"/><path d="M12 2 Q22 3 22.5 13 Q22 6 14 4 Z" fill="#ffb52d"/><path d="M17 0 Q23 6 21 12 Q19 4 14 3 Z" fill="#ffcc3a"/></svg>
<svg class="r" style="left:631px;top:906px;" width="22" height="22" viewBox="0 0 22 22"><path d="M11 11 L1.47 5.50 A11 11 0 0 1 20.53 5.50 Z" fill="#db4437"/><path d="M11 11 L20.53 5.50 A11 11 0 0 1 11.00 22.00 Z" fill="#fcc934"/><path d="M11 11 L11.00 22.00 A11 11 0 0 1 1.47 5.50 Z" fill="#1e8e3e"/><circle cx="11" cy="11" r="5.06" fill="#fff"/><circle cx="11" cy="11" r="3.96" fill="#1a73e8"/></svg>
<svg class="r" style="left:680px;top:906px;" width="23" height="23" viewBox="0 0 23 23"><rect width="23" height="23" fill="#bf0000"/><text x="2" y="19" font-family="Liberation Sans" font-weight="bold" font-style="italic" font-size="19" fill="#fff">Fz</text></svg>
<svg class="r" style="left:728px;top:906px;" width="24" height="23" viewBox="0 0 24 23"><circle cx="12" cy="11.5" r="11" fill="#1f7ad2"/><path d="M2 9 L12 14 L22 9 V17 Q12 23 2 17 Z" fill="#e9eef6"/><path d="M4 7 L12 12 L20 7" stroke="#fff" stroke-width="1.3" fill="none"/></svg>
<div class="r" style="left:766px;top:897px;width:48px;height:40px;background:#3f4f56;"></div>
<svg class="r" style="left:777px;top:904px;" width="26" height="26" viewBox="0 0 26 26"><ellipse cx="8.5" cy="8" rx="6.8" ry="4.6" transform="rotate(-28 8.5 8)" fill="#f2c64e" stroke="#a88a3a" stroke-width="0.6"/><ellipse cx="20.5" cy="10.5" rx="3.6" ry="6" transform="rotate(12 20.5 10.5)" fill="#f2c64e" stroke="#a88a3a" stroke-width="0.6"/><ellipse cx="13.5" cy="17" rx="8.8" ry="6.8" fill="#f2c64e" stroke="#a88a3a" stroke-width="0.6"/><path d="M8 21 L18 12" stroke="#fbe08a" stroke-width="2"/></svg>
<svg class="r" style="left:828px;top:904px;" width="21" height="26" viewBox="0 0 21 26"><defs><linearGradient id="np" x1="0" y1="0" x2="0" y2="1"><stop offset="0" stop-color="#f4f6f2"/><stop offset="0.45" stop-color="#e8f2d0"/><stop offset="0.75" stop-color="#6cc83a"/><stop offset="1" stop-color="#129a10"/></linearGradient></defs><path d="M0.5 1 H13 L17.5 5 V24.5 H0.5 Z" fill="url(#np)" stroke="#c8ccc0" stroke-width="0.8"/><path d="M4.5 7 V14 M5.8 7 V14" stroke="#222" stroke-width="0.9"/><path d="M7 11.5 H11" stroke="#333" stroke-width="1.2" stroke-dasharray="1.5 1"/><path d="M13 17 L19.5 2" stroke="#f0a020" stroke-width="2"/><path d="M19 1.5 L20.5 0.5" stroke="#e04060" stroke-width="1.5"/></svg>
<svg class="r" style="left:876px;top:905px;" width="23" height="23" viewBox="0 0 23 23"><rect width="23" height="23" fill="#b30b00"/><path d="M6 18 Q10 8 11.5 3 Q13 8 17 18 Q11 13 6 18 Z" fill="none" stroke="#fff" stroke-width="1.5"/></svg>
<svg class="r" style="left:924px;top:904px;" width="25" height="24" viewBox="0 0 25 24"><rect x="0.5" y="0.5" width="24" height="18" fill="#222" stroke="#bbb"/><path d="M3 4 L6 6 L3 8" stroke="#fff" fill="none"/><path d="M10 14 L15 10 L19 14 L15 18 Z" fill="#e04a3a"/><path d="M13 17 L18 13 L22 17 L17 22 Z" fill="#8bc34a"/><path d="M16 12 L20 9 L23 12 L19 15 Z" fill="#3f7fd6"/></svg>
<svg class="r" style="left:974px;top:905px;" width="24" height="24" viewBox="0 0 24 24"><circle cx="12" cy="12" r="11" fill="#1e9be2"/><text x="6" y="19" font-family="Liberation Sans" font-weight="bold" font-size="17" fill="#fff">S</text></svg>
<svg class="r" style="left:1023px;top:905px;" width="23" height="23" viewBox="0 0 23 23"><circle cx="11.5" cy="11.5" r="11" fill="#c8d0d8"/><path d="M2 9 Q8 4 14 7 Q10 11 4 14 Z" fill="#3e9a3a"/><path d="M12 12 Q18 10 22 14 Q18 20 12 18 Z" fill="#3a7fc8"/></svg>
<svg class="r" style="left:1072px;top:905px;" width="24" height="24" viewBox="0 0 24 24"><rect width="24" height="24" fill="#ef443b"/><path d="M4 12 L8.5 7.5 L13 12 L8.5 16.5 Z M12 7 L13.3 5.8 L19.5 12 L13.3 18.2 L12 17 L17 12 Z" fill="#fff"/></svg>
<svg class="r" style="left:1121px;top:905px;" width="24" height="24" viewBox="0 0 24 24"><rect width="24" height="24" fill="#ef443b"/><path d="M4 12 L8.5 7.5 L13 12 L8.5 16.5 Z M12 7 L13.3 5.8 L19.5 12 L13.3 18.2 L12 17 L17 12 Z" fill="#fff"/></svg>
<div class="r" style="left:476px;top:935px;width:40px;height:2px;background:#76b9ed;"></div>
<div class="r" style="left:525px;top:935px;width:40px;height:2px;background:#76b9ed;"></div>
<div class="r" style="left:574px;top:935px;width:40px;height:2px;background:#76b9ed;"></div>
<div class="r" style="left:623px;top:935px;width:40px;height:2px;background:#76b9ed;"></div>
<div class="r" style="left:672px;top:935px;width:40px;height:2px;background:#76b9ed;"></div>
<div class="r" style="left:721px;top:935px;width:40px;height:2px;background:#76b9ed;"></div>
<div class="r" style="left:766px;top:935px;width:48px;height:2px;background:#76b9ed;"></div>
<div class="r" style="left:819px;top:935px;width:40px;height:2px;background:#76b9ed;"></div>
<div class="r" style="left:868px;top:935px;width:40px;height:2px;background:#76b9ed;"></div>
<div class="r" style="left:917px;top:935px;width:40px;height:2px;background:#76b9ed;"></div>
<div class="r" style="left:966px;top:935px;width:40px;height:2px;background:#76b9ed;"></div>
<div class="r" style="left:1015px;top:935px;width:40px;height:2px;background:#76b9ed;"></div>
<div class="r" style="left:1064px;top:935px;width:40px;height:2px;background:#76b9ed;"></div>
<div class="r" style="left:1113px;top:935px;width:40px;height:2px;background:#76b9ed;"></div>
<div class="r" style="left:507px;top:935px;width:1px;height:2px;background:#22343a;"></div>
<div class="r" style="left:899px;top:935px;width:1px;height:2px;background:#22343a;"></div>
<svg class="r" style="left:1393px;top:913px;" width="14" height="9" viewBox="0 0 14 9"><path d="M1 8 L7 2 L13 8" fill="none" stroke="#fff" stroke-width="1.3"/></svg>
<svg class="r" style="left:1415px;top:910px;" width="16" height="15" viewBox="0 0 16 15"><path d="M1 5 H4 L8 1 V14 L4 10 H1 Z" fill="none" stroke="#fff" stroke-width="1.2"/><path d="M10 5 L14 9 M14 5 L10 9" stroke="#fff" stroke-width="1.2"/></svg>
<svg class="r" style="left:1444px;top:909px;" width="6" height="16" viewBox="0 0 6 16"><rect x="0.5" y="0.5" width="5" height="15" fill="#222" stroke="#444"/><rect x="1.5" y="2" width="3" height="3" fill="#e85c3a"/><rect x="1.5" y="6" width="3" height="2" fill="#e85c3a"/><rect x="1.5" y="10" width="3" height="2" fill="#e85c3a"/></svg>
<svg class="r" style="left:1466px;top:909px;" width="17" height="15" viewBox="0 0 17 15"><path d="M1 14 A13 13 0 0 1 14 1 M4 14 A10 10 0 0 1 14 4 M7 14 A7 7 0 0 1 14 7" fill="none" stroke="#fff" stroke-width="1.1"/><circle cx="13" cy="13" r="2" fill="#fff"/></svg>
<div class="t " style="left:1490px;top:907px;height:20px;line-height:20px;font-size:11.8px;color:#fff;letter-spacing:-0.524px;">ENG</div>
<div class="t " style="left:1541px;top:897px;height:20px;line-height:20px;font-size:11.8px;color:#fff;letter-spacing:-0.305px;">16:38</div>
<div class="t " style="left:1526px;top:916px;height:20px;line-height:20px;font-size:11.8px;color:#fff;letter-spacing:-0.235px;">26-03-2021</div>
<svg class="r" style="left:1602px;top:910px;" width="17" height="16" viewBox="0 0 17 16"><path d="M0.75 0.75 H16.25 V11.25 H11 L8.5 14.5 L6 11.25 H0.75 Z" fill="none" stroke="#fff" stroke-width="1.2"/></svg>
<div class="r" style="left:1638px;top:897px;width:1px;height:40px;background:#58606a;"></div>
<div class="r" style="left:1641px;top:905px;width:2px;height:32px;background:#0a0a12;"></div>
<div class="r" style="left:1641px;top:483px;width:2px;height:70px;background:#222218;"></div>
<div class="r" style="left:1641px;top:253px;width:2px;height:53px;background:#6a6b62;"></div>
<div class="r" style="left:1641px;top:291px;width:2px;height:2px;background:#f08020;"></div>
<div class="r" style="left:1641px;top:293px;width:2px;height:4px;background:#2080f0;"></div>
<div class="t " style="left:1350px;top:819px;height:26px;line-height:26px;font-size:19.5px;color:rgba(160,165,160,0.6);letter-spacing:0.195px;">Activate Windows</div>
<div class="t " style="left:1350px;top:845px;height:20px;line-height:20px;font-size:13.5px;color:rgba(160,165,160,0.6);letter-spacing:0.655px;">Go to Settings to activate Windows.</div>
<div class="r" style="left:0px;top:1040px;width:1920px;height:40px;background:linear-gradient(to right,#22373f 0%,#22363f 45%,#1f2c46 85%,#1f2a48 100%);"></div>
<svg class="r" style="left:15px;top:1052px;" width="17" height="17" viewBox="0 0 17 17"><path d="M0 2.3 L7 1.3 V8 H0 Z M8 1.1 L17 0 V8 H8 Z M0 9 H7 V15.7 L0 14.7 Z M8 9 H17 V17 L8 15.9 Z" fill="#fff"/></svg>
<div class="r" style="left:48px;top:1040px;width:343px;height:40px;background:#f0f0f0;"></div>
<svg class="r" style="left:59px;top:1051px;" width="18" height="18" viewBox="0 0 18 18"><circle cx="11.5" cy="6.5" r="5.5" fill="none" stroke="#222" stroke-width="1.2"/><path d="M7.5 10.5 L1 17" stroke="#222" stroke-width="1.4"/></svg>
<div class="t " style="left:88px;top:1050px;height:20px;line-height:20px;font-size:15px;color:#333;letter-spacing:-0.293px;">Type here to search</div>
<svg class="r" style="left:407px;top:1051px;" width="18" height="18" viewBox="0 0 18 18"><circle cx="9" cy="9" r="7.3" fill="none" stroke="#fff" stroke-width="1.8"/></svg>
<svg class="r" style="left:455px;top:1051px;" width="18" height="18" viewBox="0 0 18 18"><rect x="2" y="4" width="11" height="9" fill="none" stroke="#fff" stroke-width="1.4"/><path d="M0 1 H15 M0 16 H15 M16.5 3 V6 M16.5 8 V11 M16.5 13 V15" stroke="#fff" stroke-width="1.4"/></svg>
<svg class="r" style="left:503px;top:1048px;" width="24" height="24" viewBox="0 0 24 24"><circle cx="12" cy="12" r="11.5" fill="#1c7fd8"/><path d="M3 14 Q4 4 13 3 Q22 3 23 11 Q23 16 16 16 Q10 16 11 12 Q6 13 7 18 Q8 22 14 23 Q4 23 3 14 Z" fill="#35c1f1"/><path d="M11 12 Q12 8 17 9 Q23 10 23 12 Q22 16 16 16 Q10 16 11 12 Z" fill="#50e6a0"/></svg>
<svg class="r" style="left:552px;top:1048px;" width="24" height="24" viewBox="0 0 24 24"><rect width="24" height="24" rx="2" fill="#fb7a24"/><path d="M5 5 Q12 8 19 5 Q16 12 19 19 Q12 16 5 19 Q8 12 5 5 Z" fill="none" stroke="#fff" stroke-width="2.6"/></svg>
<svg class="r" style="left:601px;top:1049px;" width="24" height="22" viewBox="0 0 24 22"><path d="M0 3 H9 L11 5 H24 V21 H0 Z" fill="#e9b730"/><rect x="0" y="7" width="24" height="14" fill="#fad25c"/><rect x="7" y="14" width="10" height="7" fill="#3c8fde"/><rect x="10" y="17" width="4" height="4" fill="#fad25c"/></svg>
<svg class="r" style="left:651px;top:1049px;" width="22" height="22" viewBox="0 0 22 22"><path d="M11 11 L1.47 5.50 A11 11 0 0 1 20.53 5.50 Z" fill="#db4437"/><path d="M11 11 L20.53 5.50 A11 11 0 0 1 11.00 22.00 Z" fill="#fcc934"/><path d="M11 11 L11.00 22.00 A11 11 0 0 1 1.47 5.50 Z" fill="#1e8e3e"/><circle cx="11" cy="11" r="5.06" fill="#fff"/><circle cx="11" cy="11" r="3.96" fill="#1a73e8"/></svg>
<svg class="r" style="left:699px;top:1048px;" width="23" height="24" viewBox="0 0 23 24"><path d="M11.5 0 L23 6 V18 L11.5 24 L0 18 V6 Z" fill="#9d3a5a"/><path d="M11.5 0 L23 6 L11.5 12 L0 6 Z" fill="#b5d76a"/><path d="M11.5 12 L23 6 V18 L11.5 24 Z" fill="#3a7fd0"/><path d="M5 8 L11.5 5 L18 8 V15 L11.5 19 L5 15 Z" fill="#f4f4f4"/></svg>
<svg class="r" style="left:748px;top:1048px;" width="24" height="24" viewBox="0 0 24 24"><circle cx="12" cy="12" r="12" fill="#ef5b25"/><path d="M6 18 L16 8 M14 6 L18 10" stroke="#fff" stroke-width="2"/></svg>
<svg class="r" style="left:796px;top:1048px;" width="24" height="24" viewBox="0 0 24 24"><circle cx="12" cy="12" r="11.5" fill="#1f9ee3"/><text x="6" y="19" font-family="Liberation Sans" font-weight="bold" font-size="17" fill="#fff">S</text></svg>
<div class="r" style="left:834px;top:1040px;width:48px;height:40px;background:#3b4d5a;"></div>
<svg class="r" style="left:846px;top:1048px;" width="24" height="24" viewBox="0 0 24 24"><rect width="24" height="24" fill="#ef443b"/><path d="M4 12 L8.5 7.5 L13 12 L8.5 16.5 Z M12 7 L13.3 5.8 L19.5 12 L13.3 18.2 L12 17 L17 12 Z" fill="#fff"/></svg>
<div class="r" style="left:544px;top:1078px;width:40px;height:2px;background:#76b9ed;"></div>
<div class="r" style="left:642px;top:1078px;width:40px;height:2px;background:#76b9ed;"></div>
<div class="r" style="left:691px;top:1078px;width:40px;height:2px;background:#76b9ed;"></div>
<div class="r" style="left:740px;top:1078px;width:40px;height:2px;background:#76b9ed;"></div>
<div class="r" style="left:789px;top:1078px;width:40px;height:2px;background:#76b9ed;"></div>
<div class="r" style="left:834px;top:1078px;width:48px;height:2px;background:#76b9ed;"></div>
<svg class="r" style="left:1652px;top:1054px;" width="13" height="8" viewBox="0 0 13 8"><path d="M1 7 L6.5 1.5 L12 7" fill="none" stroke="#fff" stroke-width="1.2"/></svg>
<svg class="r" style="left:1677px;top:1051px;" width="13" height="17" viewBox="0 0 13 17"><rect x="1" y="4" width="8" height="9" rx="2" fill="none" stroke="#fff" stroke-width="1.1"/><path d="M9 7 L12 5 V12 L9 10" fill="none" stroke="#fff" stroke-width="1.1"/><path d="M2 1.5 Q5 0 8 1.5 M2 15.5 Q5 17 8 15.5" fill="none" stroke="#fff"/></svg>
<svg class="r" style="left:1698px;top:1054px;" width="17" height="11" viewBox="0 0 17 11"><path d="M3 10.5 Q0 10.5 0.5 7.5 Q1 5 4 5.5 Q5 0.5 10 1 Q14 1.5 14 5.5 Q17 5.5 16.5 8.5 Q16 10.5 14 10.5 Z" fill="#e0e3ea"/><path d="M4 5.5 Q5 0.5 10 1 Q14 1.5 14 5.5" fill="#b0b8c8"/></svg>
<svg class="r" style="left:1722px;top:1053px;" width="17" height="14" viewBox="0 0 17 14"><rect x="2.5" y="0.5" width="14" height="10" fill="none" stroke="#fff" stroke-width="1.1"/><path d="M9.5 11 V13 M5.5 13.3 H13.5 M0.5 2 V13" stroke="#fff" stroke-width="1.1"/><rect x="0" y="0" width="4" height="4" fill="#22374a" stroke="#fff" stroke-width="0.9"/></svg>
<svg class="r" style="left:1747px;top:1052px;" width="17" height="16" viewBox="0 0 17 16"><path d="M1 5 H4 L8 1 V15 L4 11 H1 Z" fill="none" stroke="#fff" stroke-width="1.1"/><path d="M10 5.5 Q11.5 8 10 10.5 M12 3.5 Q15 8 12 12.5 M14 1.5 Q18 8 14 14.5" fill="none" stroke="#fff" stroke-width="1.1"/></svg>
<div class="t " style="left:1773px;top:1049px;height:20px;line-height:20px;font-size:11.8px;color:#fff;letter-spacing:-0.857px;">ENG</div>
<div class="t " style="left:1813px;top:1040px;height:20px;line-height:20px;font-size:11.8px;color:#fff;letter-spacing:-0.135px;">4:38 PM</div>
<div class="t " style="left:1809px;top:1058px;height:20px;line-height:20px;font-size:11.8px;color:#fff;letter-spacing:-0.166px;">3/26/2021</div>
<svg class="r" style="left:1878px;top:1052px;" width="24" height="24" viewBox="0 0 24 24"><path d="M0.5 0.5 H16.5 V11.5 H8 L4 15 V11.5 H0.5 Z" fill="#fff"/><path d="M3 3.5 H14 M3 6 H14 M3 8.5 H11" stroke="#22374a" stroke-width="1"/><circle cx="16" cy="15" r="7" fill="#2b2f38" stroke="#8a8f98" stroke-width="1"/><text x="13.2" y="19" font-family="Liberation Sans" font-size="10" fill="#fff">1</text></svg>
<div class="r" style="left:1915px;top:1040px;width:1px;height:40px;background:#6a7488;"></div>
</body></html>
